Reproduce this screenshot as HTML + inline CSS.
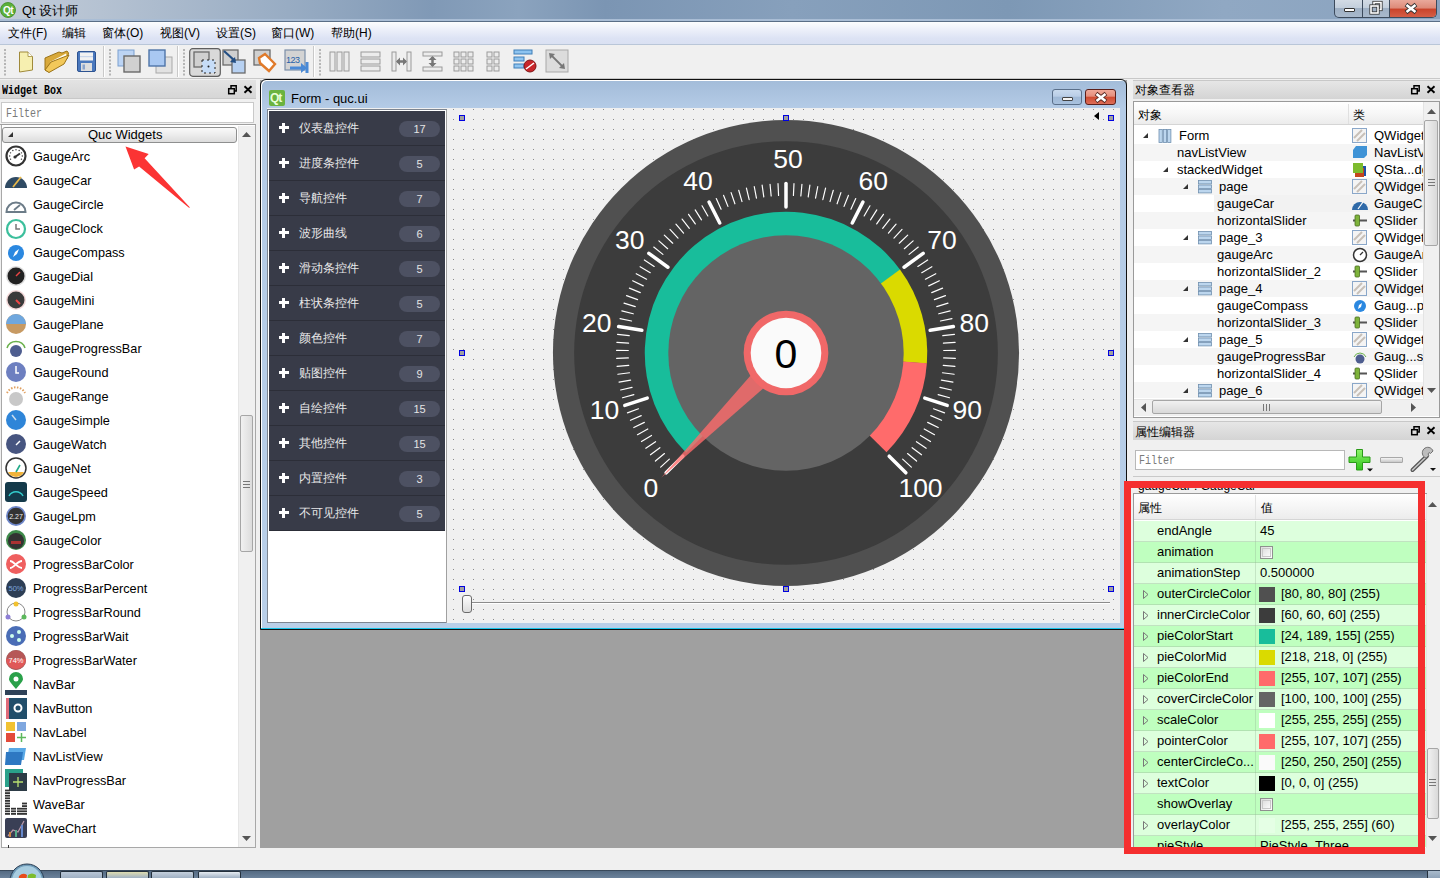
<!DOCTYPE html><html><head><meta charset="utf-8"><style>
html,body{margin:0;padding:0;width:1440px;height:878px;overflow:hidden;background:#f0f0f0;}
body{position:relative;font-family:"Liberation Sans",sans-serif;}
div{box-sizing:border-box;}
.t{position:absolute;white-space:nowrap;line-height:1;}
svg{position:absolute;overflow:visible;}
</style></head><body>
<div style="position:absolute;left:0px;top:0px;width:1440px;height:21px;background:linear-gradient(90deg,#c3cdd9 0%,#b5c2d2 7%,#98acc3 20%,#8099b6 30%,#8ba3be 36%,#7b95b3 42%,#87a0bc 55%,#7d98b5 70%,#90a8c3 85%,#8aa3bf 100%);"></div>
<div style="position:absolute;left:0px;top:19px;width:1440px;height:2px;background:#a9bdd5;"></div>
<div style="position:absolute;left:0px;top:21px;width:1440px;height:1px;background:#5a6e86;"></div>
<svg style="left:0;top:2px" width="18" height="18"><circle cx="8" cy="8" r="7.5" fill="#5cb03a" stroke="#3f8a25" stroke-width="0.8"/><text x="8" y="12" font-family="Liberation Sans" font-size="10" font-weight="bold" fill="#fff" text-anchor="middle" letter-spacing="-0.5">Qt</text></svg>
<div class="t" style="left:22px;top:4px;font-size:13px;color:#000;">Qt 设计师</div>
<div style="position:absolute;left:1334px;top:0px;width:103px;height:18px;border:1px solid #3c4a5c;border-top:none;border-radius:0 0 5px 5px;background:linear-gradient(#d3dbe5 0%,#c3cfdc 45%,#9fb0c4 50%,#a9b9cc 100%);overflow:hidden;"><div style="position:absolute;left:27px;top:0;width:1px;height:18px;background:#3c4a5c"></div><div style="position:absolute;left:54px;top:0;width:48px;height:18px;background:linear-gradient(#e9a99b 0%,#dd8a78 45%,#c9432a 50%,#d6614a 100%);border-left:1px solid #3c4a5c"></div><div style="position:absolute;left:9px;top:8px;width:11px;height:4px;background:#fff;border:1px solid #333;border-radius:1px"></div><svg style="left:34px;top:1px" width="14" height="14"><rect x="5" y="1.5" width="7" height="7" fill="none" stroke="#333" stroke-width="3.2"/><rect x="5" y="1.5" width="7" height="7" fill="none" stroke="#fff" stroke-width="1.6"/><rect x="2" y="5" width="7" height="7" fill="#9fb0c4" stroke="#333" stroke-width="3.2"/><rect x="2" y="5" width="7" height="7" fill="none" stroke="#fff" stroke-width="1.6"/></svg><svg style="left:69px;top:3px" width="14" height="11"><path d="M2,1.5 L12,9.5 M12,1.5 L2,9.5" stroke="#333" stroke-width="4.2"/><path d="M2.5,2 L11.5,9 M11.5,2 L2.5,9" stroke="#fff" stroke-width="2.6"/></svg></div>
<div style="position:absolute;left:0px;top:22px;width:1440px;height:23px;background:linear-gradient(#fcfdfe 0%,#eef1fa 30%,#dde3f4 70%,#d9e0f2 100%);"></div>
<div style="position:absolute;left:0px;top:44px;width:1440px;height:1px;background:#b9c6d8;"></div>
<div class="t" style="left:8px;top:26.84px;font-size:12px;color:#000;">文件(F)</div>
<div class="t" style="left:62px;top:26.84px;font-size:12px;color:#000;">编辑</div>
<div class="t" style="left:102px;top:26.84px;font-size:12px;color:#000;">窗体(O)</div>
<div class="t" style="left:160px;top:26.84px;font-size:12px;color:#000;">视图(V)</div>
<div class="t" style="left:216px;top:26.84px;font-size:12px;color:#000;">设置(S)</div>
<div class="t" style="left:271px;top:26.84px;font-size:12px;color:#000;">窗口(W)</div>
<div class="t" style="left:331px;top:26.84px;font-size:12px;color:#000;">帮助(H)</div>
<div style="position:absolute;left:0px;top:45px;width:1440px;height:34px;background:#f0f0f0;"></div>
<div style="position:absolute;left:0px;top:78px;width:1440px;height:1px;background:#c8c8c8;"></div>
<div style="position:absolute;left:0px;top:79px;width:1440px;height:1px;background:#f0f0f0;"></div>
<svg style="left:4px;top:49px" width="3" height="27"><rect x="0" y="0.0" width="2" height="2" fill="#b5b5b5"/><rect x="0" y="3.5" width="2" height="2" fill="#b5b5b5"/><rect x="0" y="7.0" width="2" height="2" fill="#b5b5b5"/><rect x="0" y="10.5" width="2" height="2" fill="#b5b5b5"/><rect x="0" y="14.0" width="2" height="2" fill="#b5b5b5"/><rect x="0" y="17.5" width="2" height="2" fill="#b5b5b5"/><rect x="0" y="21.0" width="2" height="2" fill="#b5b5b5"/><rect x="0" y="24.5" width="2" height="2" fill="#b5b5b5"/></svg>
<svg style="left:109px;top:49px" width="3" height="27"><rect x="0" y="0.0" width="2" height="2" fill="#b5b5b5"/><rect x="0" y="3.5" width="2" height="2" fill="#b5b5b5"/><rect x="0" y="7.0" width="2" height="2" fill="#b5b5b5"/><rect x="0" y="10.5" width="2" height="2" fill="#b5b5b5"/><rect x="0" y="14.0" width="2" height="2" fill="#b5b5b5"/><rect x="0" y="17.5" width="2" height="2" fill="#b5b5b5"/><rect x="0" y="21.0" width="2" height="2" fill="#b5b5b5"/><rect x="0" y="24.5" width="2" height="2" fill="#b5b5b5"/></svg>
<svg style="left:183px;top:49px" width="3" height="27"><rect x="0" y="0.0" width="2" height="2" fill="#b5b5b5"/><rect x="0" y="3.5" width="2" height="2" fill="#b5b5b5"/><rect x="0" y="7.0" width="2" height="2" fill="#b5b5b5"/><rect x="0" y="10.5" width="2" height="2" fill="#b5b5b5"/><rect x="0" y="14.0" width="2" height="2" fill="#b5b5b5"/><rect x="0" y="17.5" width="2" height="2" fill="#b5b5b5"/><rect x="0" y="21.0" width="2" height="2" fill="#b5b5b5"/><rect x="0" y="24.5" width="2" height="2" fill="#b5b5b5"/></svg>
<svg style="left:319px;top:49px" width="3" height="27"><rect x="0" y="0.0" width="2" height="2" fill="#b5b5b5"/><rect x="0" y="3.5" width="2" height="2" fill="#b5b5b5"/><rect x="0" y="7.0" width="2" height="2" fill="#b5b5b5"/><rect x="0" y="10.5" width="2" height="2" fill="#b5b5b5"/><rect x="0" y="14.0" width="2" height="2" fill="#b5b5b5"/><rect x="0" y="17.5" width="2" height="2" fill="#b5b5b5"/><rect x="0" y="21.0" width="2" height="2" fill="#b5b5b5"/><rect x="0" y="24.5" width="2" height="2" fill="#b5b5b5"/></svg>
<div style="position:absolute;left:103px;top:46px;width:1px;height:31px;background:#c9c9c9;"></div>
<div style="position:absolute;left:104px;top:46px;width:1px;height:31px;background:#fff;"></div>
<div style="position:absolute;left:177px;top:46px;width:1px;height:31px;background:#c9c9c9;"></div>
<div style="position:absolute;left:178px;top:46px;width:1px;height:31px;background:#fff;"></div>
<div style="position:absolute;left:313px;top:46px;width:1px;height:31px;background:#c9c9c9;"></div>
<div style="position:absolute;left:314px;top:46px;width:1px;height:31px;background:#fff;"></div>
<svg style="left:18px;top:50px" width="16" height="24"><path d="M1.5,2 H10 L14.5,6.5 V20 L1.5,22 Z" fill="#f6efb0" stroke="#a08a3a" stroke-width="1"/><path d="M10,2 V6.5 H14.5" fill="#fff" stroke="#a08a3a" stroke-width="0.8"/></svg><svg style="left:43px;top:49px" width="27" height="26"><path d="M2,9 L16,3 L19,4 L24,2 L25.5,4 L24,10 L6,23 L2,21 Z" fill="#d9a93a" stroke="#9c7419" stroke-width="1"/><path d="M7,13 L23,4.5 L24,8 L9,17 Z" fill="#fffdf0"/><path d="M2,21 L8,13 L26,6 L21,15 L6,23.5 Z" fill="#f2c85a" stroke="#9c7419" stroke-width="1"/></svg><svg style="left:76px;top:50px" width="22" height="24"><rect x="1.5" y="1.5" width="18" height="20" rx="1.5" fill="#4a78bd" stroke="#2d5391" stroke-width="1"/><rect x="4" y="2.5" width="13" height="8" fill="#f2f2f2"/><rect x="4" y="6" width="13" height="1.2" fill="#c9d6ea"/><rect x="5" y="13" width="11" height="8" fill="#dedede"/><rect x="6.5" y="14.5" width="2.5" height="5" fill="#8aa4cc"/></svg><svg style="left:117px;top:49px" width="26" height="26"><rect x="1" y="1" width="16" height="16" fill="#bcd4f4" stroke="#7a9fcf" stroke-width="1"/><rect x="7" y="7" width="16" height="16" fill="#d0d0d0" stroke="#6a6a6a" stroke-width="1.4"/></svg><svg style="left:148px;top:49px" width="26" height="26"><rect x="8" y="8" width="16" height="16" fill="#e2e2e2" stroke="#a8a8a8" stroke-width="1"/><rect x="1" y="1" width="16" height="16" fill="#a9c8f2" stroke="#4f74a8" stroke-width="1.4"/></svg><svg style="left:189px;top:48px" width="32" height="29"><rect x="0.7" y="0.7" width="30.6" height="27.6" rx="3" fill="#d9d9d9" stroke="#5e5e5e" stroke-width="1.2"/><rect x="5" y="4" width="15" height="15" fill="#d0d0d0" stroke="#6a6a6a" stroke-width="1.3"/><rect x="13" y="12" width="13" height="13" fill="#c6dcf7" stroke="#222" stroke-width="1" stroke-dasharray="2 3"/><circle cx="19.5" cy="18.5" r="1" fill="#222"/></svg><svg style="left:222px;top:49px" width="26" height="26"><rect x="1" y="1" width="15" height="15" fill="#d0d0d0" stroke="#6a6a6a" stroke-width="1.3"/><rect x="10" y="11" width="13" height="13" fill="#b7d1f2" stroke="#6a6a6a" stroke-width="1.3"/><path d="M2,2 L13,12" stroke="#244f84" stroke-width="2.2"/><polygon points="14,14 8,13 13,8" fill="#244f84"/></svg><svg style="left:253px;top:49px" width="26" height="26"><rect x="1" y="1" width="16" height="15" fill="#d0d0d0" stroke="#6a6a6a" stroke-width="1.3"/><polygon points="6,9 12,5 22,15 16,22 7,14" fill="#fff" stroke="#e07a2a" stroke-width="2.4"/></svg><svg style="left:284px;top:49px" width="26" height="27"><rect x="1" y="1" width="20" height="20" fill="#d3d3d3" stroke="#7c8fa8" stroke-width="1.2"/><text x="2" y="14" font-family="Liberation Sans" font-size="9" fill="#2660a8" letter-spacing="-0.5">123</text><path d="M6,19 H19" stroke="#4a8ad6" stroke-width="3"/><polygon points="17,14 23,19 17,24" fill="#4a8ad6"/><rect x="21.5" y="13" width="3" height="11" fill="#4a8ad6"/></svg><svg style="left:329px;top:51px" width="22" height="22"><rect x="1" y="1" width="5" height="19" fill="#ececec" stroke="#9a9a9a" stroke-width="1"/><rect x="8" y="1" width="5" height="19" fill="#ececec" stroke="#9a9a9a" stroke-width="1"/><rect x="15" y="1" width="5" height="19" fill="#ececec" stroke="#9a9a9a" stroke-width="1"/></svg><svg style="left:360px;top:51px" width="22" height="22"><rect x="1" y="1" width="19" height="5" fill="#ececec" stroke="#9a9a9a" stroke-width="1"/><rect x="1" y="8" width="19" height="5" fill="#ececec" stroke="#9a9a9a" stroke-width="1"/><rect x="1" y="15" width="19" height="5" fill="#ececec" stroke="#9a9a9a" stroke-width="1"/></svg><svg style="left:391px;top:51px" width="22" height="22"><rect x="1" y="1" width="4" height="19" fill="#ececec" stroke="#9a9a9a"/><rect x="16" y="1" width="4" height="19" fill="#ececec" stroke="#9a9a9a"/><path d="M6,10.5 H15" stroke="#777" stroke-width="2.5"/><polygon points="5,10.5 9,6.5 9,14.5" fill="#777"/><polygon points="16,10.5 12,6.5 12,14.5" fill="#777"/></svg><svg style="left:422px;top:51px" width="22" height="22"><rect x="1" y="1" width="19" height="4" fill="#ececec" stroke="#9a9a9a"/><rect x="1" y="16" width="19" height="4" fill="#ececec" stroke="#9a9a9a"/><path d="M10.5,6 V15" stroke="#777" stroke-width="2.5"/><polygon points="10.5,5 6.5,9 14.5,9" fill="#777"/><polygon points="10.5,16 6.5,12 14.5,12" fill="#777"/></svg><svg style="left:453px;top:51px" width="22" height="22"><rect x="1" y="1" width="5" height="5" fill="#ececec" stroke="#9a9a9a"/><rect x="1" y="8" width="5" height="5" fill="#ececec" stroke="#9a9a9a"/><rect x="1" y="15" width="5" height="5" fill="#ececec" stroke="#9a9a9a"/><rect x="8" y="1" width="5" height="5" fill="#ececec" stroke="#9a9a9a"/><rect x="8" y="8" width="5" height="5" fill="#ececec" stroke="#9a9a9a"/><rect x="8" y="15" width="5" height="5" fill="#ececec" stroke="#9a9a9a"/><rect x="15" y="1" width="5" height="5" fill="#ececec" stroke="#9a9a9a"/><rect x="15" y="8" width="5" height="5" fill="#ececec" stroke="#9a9a9a"/><rect x="15" y="15" width="5" height="5" fill="#ececec" stroke="#9a9a9a"/></svg><svg style="left:486px;top:51px" width="16" height="22"><rect x="1" y="1" width="5" height="5" fill="#ececec" stroke="#9a9a9a"/><rect x="1" y="8" width="5" height="5" fill="#ececec" stroke="#9a9a9a"/><rect x="1" y="15" width="5" height="5" fill="#ececec" stroke="#9a9a9a"/><rect x="8" y="1" width="5" height="5" fill="#ececec" stroke="#9a9a9a"/><rect x="8" y="8" width="5" height="5" fill="#ececec" stroke="#9a9a9a"/><rect x="8" y="15" width="5" height="5" fill="#ececec" stroke="#9a9a9a"/></svg><svg style="left:513px;top:49px" width="26" height="26"><rect x="1" y="1" width="18" height="4" fill="#8ec4f0" stroke="#3f7fb8"/><rect x="1" y="8" width="10" height="4" fill="#8ec4f0" stroke="#3f7fb8"/><rect x="1" y="15" width="10" height="4" fill="#8ec4f0" stroke="#3f7fb8"/><circle cx="17" cy="17" r="6" fill="#c8262a" stroke="#7e1416"/><path d="M13,20 L21,14" stroke="#fff" stroke-width="1.5"/></svg><svg style="left:545px;top:49px" width="25" height="25"><rect x="1" y="1" width="22" height="22" fill="#dcdcdc" stroke="#a8a8a8"/><path d="M6,6 L18,18" stroke="#777" stroke-width="1.8"/><polygon points="4,4 10,5 5,10" fill="#777"/><polygon points="20,20 14,19 19,14" fill="#777"/></svg>
<div style="position:absolute;left:0px;top:80px;width:256px;height:19px;background:linear-gradient(#e3e3e3,#d6d6d6);border-bottom:1px solid #c8c8c8;"></div>
<div class="t" style="left:2px;top:86.53px;font-size:10px;color:#000;font-family:'Liberation Mono';font-weight:bold;transform:scaleY(1.2);transform-origin:0 85%;">Widget Box</div>
<div style="position:absolute;left:0px;top:99px;width:256px;height:750px;background:#f0f0f0;"></div>
<div style="position:absolute;left:1px;top:102px;width:253px;height:21px;background:#fff;border:1px solid #c9c9c9;"></div>
<div class="t" style="left:6px;top:110.03px;font-size:10px;color:#7a7a7a;font-family:'Liberation Mono';transform:scaleY(1.2);transform-origin:0 85%;">Filter</div>
<div style="position:absolute;left:0px;top:124px;width:256px;height:1px;background:#a0a0a0;"></div>
<div style="position:absolute;left:1px;top:125px;width:255px;height:723px;background:#fff;border:1px solid #a8a8a8;border-top:none;"></div>
<div style="position:absolute;left:2px;top:127px;width:235px;height:16px;border:1px solid #8e8f8f;border-radius:3px;background:linear-gradient(#fafafa 0%,#ececec 50%,#dcdcdc 100%);"></div>
<svg style="left:8px;top:132px" width="6" height="6"><polygon points="5,0 5,5 0,5" fill="#333"/></svg>
<div class="t" style="left:88px;top:128.00px;font-size:13px;color:#000;">Quc Widgets</div>
<div style="position:absolute;left:238px;top:126px;width:17px;height:721px;background:#f0f0f0;border-left:1px solid #e6e6e6;"></div>
<svg style="left:242px;top:132px" width="9" height="5"><polygon points="0,5 4.5,0 9,5" fill="#555"/></svg>
<svg style="left:242px;top:836px" width="9" height="5"><polygon points="0,0 4.5,5 9,0" fill="#555"/></svg>
<div style="position:absolute;left:240px;top:415px;width:13px;height:137px;border:1px solid #a6a6a6;border-radius:2px;background:linear-gradient(90deg,#f1f1f1,#dcdcdc);"></div>
<div style="position:absolute;left:243px;top:481px;width:7px;height:1px;background:#777;"></div>
<div style="position:absolute;left:243px;top:484px;width:7px;height:1px;background:#777;"></div>
<div style="position:absolute;left:243px;top:487px;width:7px;height:1px;background:#777;"></div>
<svg style="left:5px;top:145px" width="22" height="22"><circle cx="11" cy="11" r="9.5" fill="#fff" stroke="#333" stroke-width="2.2"/><circle cx="16.46" cy="14.15" r="0.7" fill="#333"/><circle cx="17.30" cy="11.00" r="0.7" fill="#333"/><circle cx="16.46" cy="7.85" r="0.7" fill="#333"/><circle cx="14.15" cy="5.54" r="0.7" fill="#333"/><circle cx="11.00" cy="4.70" r="0.7" fill="#333"/><circle cx="7.85" cy="5.54" r="0.7" fill="#333"/><circle cx="5.54" cy="7.85" r="0.7" fill="#333"/><circle cx="4.70" cy="11.00" r="0.7" fill="#333"/><circle cx="5.54" cy="14.15" r="0.7" fill="#333"/><line x1="10" y1="12" x2="15" y2="8.5" stroke="#333" stroke-width="2"/><circle cx="10" cy="12" r="1.6" fill="#333"/></svg>
<div class="t" style="left:33px;top:150.75px;font-size:12.7px;color:#000;">GaugeArc</div>
<svg style="left:5px;top:169px" width="22" height="22"><path d="M0,19 A11,11 0 0 1 22,19 Z" fill="#2f4a63"/><line x1="8" y1="18" x2="16" y2="8" stroke="#e8b84a" stroke-width="1.8"/></svg>
<div class="t" style="left:33px;top:174.75px;font-size:12.7px;color:#000;">GaugeCar</div>
<svg style="left:5px;top:193px" width="22" height="22"><path d="M1.5,19 A9.5,9.5 0 1 1 20.5,19 Z" fill="#fff" stroke="#6c7c88" stroke-width="2"/><line x1="9" y1="17" x2="15" y2="12" stroke="#6c7c88" stroke-width="1.8"/></svg>
<div class="t" style="left:33px;top:198.75px;font-size:12.7px;color:#000;">GaugeCircle</div>
<svg style="left:5px;top:217px" width="22" height="22"><circle cx="11" cy="12" r="9" fill="#fff" stroke="#3cbf9c" stroke-width="2.2"/><path d="M11,7 V12 H15" fill="none" stroke="#777" stroke-width="1.5"/></svg>
<div class="t" style="left:33px;top:222.75px;font-size:12.7px;color:#000;">GaugeClock</div>
<svg style="left:5px;top:241px" width="22" height="22"><circle cx="11" cy="12" r="8" fill="#2b88e0"/><polygon points="14,8 12,13 8,16 10,11" fill="#fff"/></svg>
<div class="t" style="left:33px;top:246.75px;font-size:12.7px;color:#000;">GaugeCompass</div>
<svg style="left:5px;top:265px" width="22" height="22"><circle cx="11" cy="11" r="10" fill="#ddd"/><circle cx="11" cy="11" r="8.5" fill="#222"/><line x1="11" y1="11" x2="15" y2="7" stroke="#e44" stroke-width="1.5"/></svg>
<div class="t" style="left:33px;top:270.75px;font-size:12.7px;color:#000;">GaugeDial</div>
<svg style="left:5px;top:289px" width="22" height="22"><circle cx="11" cy="11" r="10" fill="#f3d9d9"/><circle cx="11" cy="11" r="8.5" fill="#3a3a3a"/><line x1="11" y1="11" x2="15" y2="15" stroke="#e44" stroke-width="2"/></svg>
<div class="t" style="left:33px;top:294.75px;font-size:12.7px;color:#000;">GaugeMini</div>
<svg style="left:5px;top:313px" width="22" height="22"><circle cx="11" cy="11" r="10" fill="#c79a63"/><path d="M1,11 A10,10 0 0 1 21,11 Z" fill="#6fa7de"/></svg>
<div class="t" style="left:33px;top:318.75px;font-size:12.7px;color:#000;">GaugePlane</div>
<svg style="left:5px;top:337px" width="22" height="22"><path d="M2,11 A9.5,9.5 0 0 1 20,11" fill="none" stroke="#6ab04c" stroke-width="1.5"/><circle cx="11" cy="14" r="6" fill="#4e5d8f"/></svg>
<div class="t" style="left:33px;top:342.75px;font-size:12.7px;color:#000;">GaugeProgressBar</div>
<svg style="left:5px;top:361px" width="22" height="22"><circle cx="11" cy="11" r="10" fill="#6d7fc0"/><path d="M11,5 V12 H14" fill="none" stroke="#fff" stroke-width="1.5"/></svg>
<div class="t" style="left:33px;top:366.75px;font-size:12.7px;color:#000;">GaugeRound</div>
<svg style="left:5px;top:385px" width="22" height="22"><path d="M2,8 A10,10 0 0 1 20,8" fill="none" stroke="#e0a060" stroke-width="2" stroke-dasharray="1.5 1.5"/><circle cx="11" cy="14" r="7" fill="#c8c8c8"/></svg>
<div class="t" style="left:33px;top:390.75px;font-size:12.7px;color:#000;">GaugeRange</div>
<svg style="left:5px;top:409px" width="22" height="22"><circle cx="11" cy="11" r="10" fill="#2e85d8"/><line x1="11" y1="11" x2="7" y2="6" stroke="#cde" stroke-width="1.5"/></svg>
<div class="t" style="left:33px;top:414.75px;font-size:12.7px;color:#000;">GaugeSimple</div>
<svg style="left:5px;top:433px" width="22" height="22"><circle cx="11" cy="11" r="10" fill="#475580"/><line x1="11" y1="12" x2="15" y2="8" stroke="#fff" stroke-width="1.5"/></svg>
<div class="t" style="left:33px;top:438.75px;font-size:12.7px;color:#000;">GaugeWatch</div>
<svg style="left:5px;top:457px" width="22" height="22"><circle cx="11" cy="11" r="10" fill="#fff" stroke="#333" stroke-width="1.5"/><path d="M3,15 A9,9 0 0 0 19,15 Z" fill="#f1b43a"/><line x1="11" y1="15" x2="15" y2="8" stroke="#2a8" stroke-width="1.6"/></svg>
<div class="t" style="left:33px;top:462.75px;font-size:12.7px;color:#000;">GaugeNet</div>
<svg style="left:5px;top:481px" width="22" height="22"><rect x="0" y="1" width="22" height="20" rx="3" fill="#143a4a"/><path d="M4,15 A8,8 0 0 1 18,15" fill="none" stroke="#3cc" stroke-width="1.5"/></svg>
<div class="t" style="left:33px;top:486.75px;font-size:12.7px;color:#000;">GaugeSpeed</div>
<svg style="left:5px;top:505px" width="22" height="22"><circle cx="11" cy="11" r="10" fill="#6d86c9"/><circle cx="11" cy="11" r="8.3" fill="#333"/><text x="11" y="14" font-size="7" fill="#eee" text-anchor="middle" font-family="Liberation Sans">2.27</text></svg>
<div class="t" style="left:33px;top:510.75px;font-size:12.7px;color:#000;">GaugeLpm</div>
<svg style="left:5px;top:529px" width="22" height="22"><circle cx="11" cy="11" r="10" fill="#3e8a4a"/><circle cx="11" cy="12" r="8" fill="#333"/><rect x="6" y="12" width="10" height="3" fill="#a33"/></svg>
<div class="t" style="left:33px;top:534.75px;font-size:12.7px;color:#000;">GaugeColor</div>
<svg style="left:5px;top:553px" width="22" height="22"><circle cx="11" cy="11" r="10" fill="#ef5f5f"/><path d="M5,8 C9,8 12,15 17,15 M5,15 C9,15 12,8 17,8" fill="none" stroke="#fff" stroke-width="1.8"/></svg>
<div class="t" style="left:33px;top:558.75px;font-size:12.7px;color:#000;">ProgressBarColor</div>
<svg style="left:5px;top:577px" width="22" height="22"><circle cx="11" cy="11" r="10" fill="#2d3e55"/><text x="11" y="14" font-size="7.5" fill="#7fa7df" text-anchor="middle" font-family="Liberation Sans">50%</text></svg>
<div class="t" style="left:33px;top:582.75px;font-size:12.7px;color:#000;">ProgressBarPercent</div>
<svg style="left:5px;top:601px" width="22" height="22"><circle cx="11" cy="11" r="9" fill="none" stroke="#888" stroke-width="1"/><circle cx="11" cy="3" r="2.5" fill="#f2c230"/><circle cx="3" cy="16" r="2.5" fill="#8e7fd6"/><circle cx="19" cy="16" r="2.5" fill="#5cb85c"/></svg>
<div class="t" style="left:33px;top:606.75px;font-size:12.7px;color:#000;">ProgressBarRound</div>
<svg style="left:5px;top:625px" width="22" height="22"><circle cx="11" cy="11" r="10" fill="#4a6db6"/><circle cx="7" cy="11" r="2" fill="#cfe"/><circle cx="14" cy="7" r="2" fill="#cfe"/><circle cx="14" cy="15" r="2" fill="#cfe"/></svg>
<div class="t" style="left:33px;top:630.75px;font-size:12.7px;color:#000;">ProgressBarWait</div>
<svg style="left:5px;top:649px" width="22" height="22"><circle cx="11" cy="11" r="10" fill="#555"/><path d="M1,10 A10,10 0 0 0 21,10 Z" fill="#e05858"/><circle cx="11" cy="11" r="10" fill="#e05858" opacity="0.7"/><text x="11" y="14" font-size="7.5" fill="#fff" text-anchor="middle" font-family="Liberation Sans">74%</text></svg>
<div class="t" style="left:33px;top:654.75px;font-size:12.7px;color:#000;">ProgressBarWater</div>
<svg style="left:5px;top:673px" width="22" height="22"><path d="M11,16 C6,10 4,8 4,6 A7,7 0 0 1 18,6 C18,8 16,10 11,16 Z" fill="#2aa14a"/><circle cx="11" cy="6" r="2.5" fill="#fff"/><rect x="0" y="17" width="22" height="5" fill="#2f4258"/></svg>
<div class="t" style="left:33px;top:678.75px;font-size:12.7px;color:#000;">NavBar</div>
<svg style="left:5px;top:697px" width="22" height="22"><rect x="1" y="1" width="21" height="21" fill="#214e6a"/><rect x="1" y="1" width="3" height="21" fill="#e06b7a"/><circle cx="13" cy="11" r="3.5" fill="none" stroke="#fff" stroke-width="2"/></svg>
<div class="t" style="left:33px;top:702.75px;font-size:12.7px;color:#000;">NavButton</div>
<svg style="left:5px;top:721px" width="22" height="22"><rect x="1" y="1" width="9" height="9" fill="#f1c232"/><rect x="12" y="1" width="9" height="9" fill="#7fa7df"/><rect x="1" y="12" width="9" height="9" fill="#e34b3b"/><path d="M16.5,12 V21 M12,16.5 H21" stroke="#5cb85c" stroke-width="1.5"/></svg>
<div class="t" style="left:33px;top:726.75px;font-size:12.7px;color:#000;">NavLabel</div>
<svg style="left:5px;top:745px" width="22" height="22"><polygon points="4,3 21,3 19,15 2,15" fill="#58a8e6"/><polygon points="1,7 18,7 16,20 0,20" fill="#2e78c2"/></svg>
<div class="t" style="left:33px;top:750.75px;font-size:12.7px;color:#000;">NavListView</div>
<svg style="left:5px;top:769px" width="22" height="22"><rect x="0" y="0" width="18" height="18" fill="#2aa18a"/><rect x="4" y="4" width="18" height="18" fill="#2d3b46"/><path d="M13,8 V18 M8,13 H18" stroke="#b8e070" stroke-width="1.3"/></svg>
<div class="t" style="left:33px;top:774.75px;font-size:12.7px;color:#000;">NavProgressBar</div>
<svg style="left:5px;top:793px" width="22" height="22"><rect x="0" y="20.0" width="5" height="1.8" fill="#333"/><rect x="0" y="17.4" width="5" height="1.8" fill="#333"/><rect x="0" y="14.8" width="5" height="1.8" fill="#333"/><rect x="0" y="12.2" width="5" height="1.8" fill="#333"/><rect x="0" y="9.6" width="5" height="1.8" fill="#333"/><rect x="0" y="7.0" width="5" height="1.8" fill="#333"/><rect x="0" y="4.399999999999999" width="5" height="1.8" fill="#333"/><rect x="0" y="1.8000000000000007" width="5" height="1.8" fill="#333"/><rect x="0" y="-0.8000000000000007" width="5" height="1.8" fill="#333"/><rect x="0" y="-3.400000000000002" width="5" height="1.8" fill="#333"/><rect x="6" y="20.0" width="5" height="1.8" fill="#333"/><rect x="6" y="17.4" width="5" height="1.8" fill="#333"/><rect x="6" y="14.8" width="5" height="1.8" fill="#333"/><rect x="12" y="20.0" width="5" height="1.8" fill="#333"/><rect x="12" y="17.4" width="5" height="1.8" fill="#333"/><rect x="12" y="14.8" width="5" height="1.8" fill="#333"/><rect x="17" y="20.0" width="5" height="1.8" fill="#333"/><rect x="17" y="17.4" width="5" height="1.8" fill="#333"/><rect x="17" y="14.8" width="5" height="1.8" fill="#333"/><rect x="17" y="12.2" width="5" height="1.8" fill="#333"/><rect x="17" y="9.6" width="5" height="1.8" fill="#333"/></svg>
<div class="t" style="left:33px;top:798.75px;font-size:12.7px;color:#000;">WaveBar</div>
<svg style="left:5px;top:817px" width="22" height="22"><rect x="0" y="1" width="22" height="20" rx="2" fill="#3a3f55"/><path d="M3,19 L8,13 L13,15 L19,4" fill="none" stroke="#b9a" stroke-width="1.2"/><rect x="4" y="15" width="2" height="5" fill="#c84"/><rect x="10" y="13" width="2" height="7" fill="#5a8"/><rect x="16" y="8" width="2" height="12" fill="#68c"/></svg>
<div class="t" style="left:33px;top:822.75px;font-size:12.7px;color:#000;">WaveChart</div>
<div style="position:absolute;left:8px;top:845px;width:1px;height:3px;background:#333;"></div>
<div style="position:absolute;left:256px;top:80px;width:4px;height:769px;background:#f0f0f0;"></div>
<div style="position:absolute;left:260px;top:80px;width:867px;height:769px;background:#a0a0a0;"></div>
<div style="position:absolute;left:260px;top:79px;width:867px;height:551px;background:linear-gradient(#a3bcd9 0px,#b4cbe6 28px,#b9cfe8 100%);border:1px solid #101010;border-radius:6px 6px 0 0;box-shadow:inset 1px 1px 0 #fff;"></div>
<div style="position:absolute;left:267px;top:108px;width:853px;height:515px;background:#f0f0f0;"></div>
<svg style="left:268px;top:109px" width="852" height="514"><defs><pattern id="dots" x="5" y="0" width="10" height="10" patternUnits="userSpaceOnUse"><rect x="0" y="0" width="1" height="1" fill="#8c8c8c"/></pattern></defs><rect width="852" height="514" fill="#f0f0f0"/><rect width="852" height="514" fill="url(#dots)"/></svg>
<div style="position:absolute;left:267px;top:109px;width:180px;height:514px;background:#fff;border:1px solid #7d8590;border-right:none;"></div>
<div style="position:absolute;left:269px;top:111px;width:176px;height:35px;background:#383b48;border-bottom:1px solid #2c2e38;"></div>
<div style="position:absolute;left:279px;top:126px;width:10px;height:3px;background:#fff;"></div>
<div style="position:absolute;left:282px;top:123px;width:3px;height:10px;background:#fff"></div>
<div style="position:absolute;left:279px;top:126px;width:9px;height:3px;background:#fff"></div>
<div class="t" style="left:299px;top:122px;font-size:12px;color:#e8e8e8;">仪表盘控件</div>
<div style="position:absolute;left:399px;top:121px;width:41px;height:16px;background:#4d5162;border-radius:8px;"><div style="position:absolute;left:0;top:2.5px;width:41px;text-align:center;font-size:11px;color:#e4e4e4;line-height:1">17</div></div>
<div style="position:absolute;left:269px;top:146px;width:176px;height:35px;background:#383b48;border-bottom:1px solid #2c2e38;"></div>
<div style="position:absolute;left:279px;top:161px;width:10px;height:3px;background:#fff;"></div>
<div style="position:absolute;left:282px;top:158px;width:3px;height:10px;background:#fff"></div>
<div style="position:absolute;left:279px;top:161px;width:9px;height:3px;background:#fff"></div>
<div class="t" style="left:299px;top:157px;font-size:12px;color:#e8e8e8;">进度条控件</div>
<div style="position:absolute;left:399px;top:156px;width:41px;height:16px;background:#4d5162;border-radius:8px;"><div style="position:absolute;left:0;top:2.5px;width:41px;text-align:center;font-size:11px;color:#e4e4e4;line-height:1">5</div></div>
<div style="position:absolute;left:269px;top:181px;width:176px;height:35px;background:#383b48;border-bottom:1px solid #2c2e38;"></div>
<div style="position:absolute;left:279px;top:196px;width:10px;height:3px;background:#fff;"></div>
<div style="position:absolute;left:282px;top:193px;width:3px;height:10px;background:#fff"></div>
<div style="position:absolute;left:279px;top:196px;width:9px;height:3px;background:#fff"></div>
<div class="t" style="left:299px;top:192px;font-size:12px;color:#e8e8e8;">导航控件</div>
<div style="position:absolute;left:399px;top:191px;width:41px;height:16px;background:#4d5162;border-radius:8px;"><div style="position:absolute;left:0;top:2.5px;width:41px;text-align:center;font-size:11px;color:#e4e4e4;line-height:1">7</div></div>
<div style="position:absolute;left:269px;top:216px;width:176px;height:35px;background:#383b48;border-bottom:1px solid #2c2e38;"></div>
<div style="position:absolute;left:279px;top:231px;width:10px;height:3px;background:#fff;"></div>
<div style="position:absolute;left:282px;top:228px;width:3px;height:10px;background:#fff"></div>
<div style="position:absolute;left:279px;top:231px;width:9px;height:3px;background:#fff"></div>
<div class="t" style="left:299px;top:227px;font-size:12px;color:#e8e8e8;">波形曲线</div>
<div style="position:absolute;left:399px;top:226px;width:41px;height:16px;background:#4d5162;border-radius:8px;"><div style="position:absolute;left:0;top:2.5px;width:41px;text-align:center;font-size:11px;color:#e4e4e4;line-height:1">6</div></div>
<div style="position:absolute;left:269px;top:251px;width:176px;height:35px;background:#383b48;border-bottom:1px solid #2c2e38;"></div>
<div style="position:absolute;left:279px;top:266px;width:10px;height:3px;background:#fff;"></div>
<div style="position:absolute;left:282px;top:263px;width:3px;height:10px;background:#fff"></div>
<div style="position:absolute;left:279px;top:266px;width:9px;height:3px;background:#fff"></div>
<div class="t" style="left:299px;top:262px;font-size:12px;color:#e8e8e8;">滑动条控件</div>
<div style="position:absolute;left:399px;top:261px;width:41px;height:16px;background:#4d5162;border-radius:8px;"><div style="position:absolute;left:0;top:2.5px;width:41px;text-align:center;font-size:11px;color:#e4e4e4;line-height:1">5</div></div>
<div style="position:absolute;left:269px;top:286px;width:176px;height:35px;background:#383b48;border-bottom:1px solid #2c2e38;"></div>
<div style="position:absolute;left:279px;top:301px;width:10px;height:3px;background:#fff;"></div>
<div style="position:absolute;left:282px;top:298px;width:3px;height:10px;background:#fff"></div>
<div style="position:absolute;left:279px;top:301px;width:9px;height:3px;background:#fff"></div>
<div class="t" style="left:299px;top:297px;font-size:12px;color:#e8e8e8;">柱状条控件</div>
<div style="position:absolute;left:399px;top:296px;width:41px;height:16px;background:#4d5162;border-radius:8px;"><div style="position:absolute;left:0;top:2.5px;width:41px;text-align:center;font-size:11px;color:#e4e4e4;line-height:1">5</div></div>
<div style="position:absolute;left:269px;top:321px;width:176px;height:35px;background:#383b48;border-bottom:1px solid #2c2e38;"></div>
<div style="position:absolute;left:279px;top:336px;width:10px;height:3px;background:#fff;"></div>
<div style="position:absolute;left:282px;top:333px;width:3px;height:10px;background:#fff"></div>
<div style="position:absolute;left:279px;top:336px;width:9px;height:3px;background:#fff"></div>
<div class="t" style="left:299px;top:332px;font-size:12px;color:#e8e8e8;">颜色控件</div>
<div style="position:absolute;left:399px;top:331px;width:41px;height:16px;background:#4d5162;border-radius:8px;"><div style="position:absolute;left:0;top:2.5px;width:41px;text-align:center;font-size:11px;color:#e4e4e4;line-height:1">7</div></div>
<div style="position:absolute;left:269px;top:356px;width:176px;height:35px;background:#383b48;border-bottom:1px solid #2c2e38;"></div>
<div style="position:absolute;left:279px;top:371px;width:10px;height:3px;background:#fff;"></div>
<div style="position:absolute;left:282px;top:368px;width:3px;height:10px;background:#fff"></div>
<div style="position:absolute;left:279px;top:371px;width:9px;height:3px;background:#fff"></div>
<div class="t" style="left:299px;top:367px;font-size:12px;color:#e8e8e8;">贴图控件</div>
<div style="position:absolute;left:399px;top:366px;width:41px;height:16px;background:#4d5162;border-radius:8px;"><div style="position:absolute;left:0;top:2.5px;width:41px;text-align:center;font-size:11px;color:#e4e4e4;line-height:1">9</div></div>
<div style="position:absolute;left:269px;top:391px;width:176px;height:35px;background:#383b48;border-bottom:1px solid #2c2e38;"></div>
<div style="position:absolute;left:279px;top:406px;width:10px;height:3px;background:#fff;"></div>
<div style="position:absolute;left:282px;top:403px;width:3px;height:10px;background:#fff"></div>
<div style="position:absolute;left:279px;top:406px;width:9px;height:3px;background:#fff"></div>
<div class="t" style="left:299px;top:402px;font-size:12px;color:#e8e8e8;">自绘控件</div>
<div style="position:absolute;left:399px;top:401px;width:41px;height:16px;background:#4d5162;border-radius:8px;"><div style="position:absolute;left:0;top:2.5px;width:41px;text-align:center;font-size:11px;color:#e4e4e4;line-height:1">15</div></div>
<div style="position:absolute;left:269px;top:426px;width:176px;height:35px;background:#383b48;border-bottom:1px solid #2c2e38;"></div>
<div style="position:absolute;left:279px;top:441px;width:10px;height:3px;background:#fff;"></div>
<div style="position:absolute;left:282px;top:438px;width:3px;height:10px;background:#fff"></div>
<div style="position:absolute;left:279px;top:441px;width:9px;height:3px;background:#fff"></div>
<div class="t" style="left:299px;top:437px;font-size:12px;color:#e8e8e8;">其他控件</div>
<div style="position:absolute;left:399px;top:436px;width:41px;height:16px;background:#4d5162;border-radius:8px;"><div style="position:absolute;left:0;top:2.5px;width:41px;text-align:center;font-size:11px;color:#e4e4e4;line-height:1">15</div></div>
<div style="position:absolute;left:269px;top:461px;width:176px;height:35px;background:#383b48;border-bottom:1px solid #2c2e38;"></div>
<div style="position:absolute;left:279px;top:476px;width:10px;height:3px;background:#fff;"></div>
<div style="position:absolute;left:282px;top:473px;width:3px;height:10px;background:#fff"></div>
<div style="position:absolute;left:279px;top:476px;width:9px;height:3px;background:#fff"></div>
<div class="t" style="left:299px;top:472px;font-size:12px;color:#e8e8e8;">内置控件</div>
<div style="position:absolute;left:399px;top:471px;width:41px;height:16px;background:#4d5162;border-radius:8px;"><div style="position:absolute;left:0;top:2.5px;width:41px;text-align:center;font-size:11px;color:#e4e4e4;line-height:1">3</div></div>
<div style="position:absolute;left:269px;top:496px;width:176px;height:35px;background:#383b48;border-bottom:1px solid #2c2e38;"></div>
<div style="position:absolute;left:279px;top:511px;width:10px;height:3px;background:#fff;"></div>
<div style="position:absolute;left:282px;top:508px;width:3px;height:10px;background:#fff"></div>
<div style="position:absolute;left:279px;top:511px;width:9px;height:3px;background:#fff"></div>
<div class="t" style="left:299px;top:507px;font-size:12px;color:#e8e8e8;">不可见控件</div>
<div style="position:absolute;left:399px;top:506px;width:41px;height:16px;background:#4d5162;border-radius:8px;"><div style="position:absolute;left:0;top:2.5px;width:41px;text-align:center;font-size:11px;color:#e4e4e4;line-height:1">5</div></div>
<svg style="left:0;top:0" width="1440" height="878"><circle cx="786.0" cy="353.0" r="233.05" fill="rgb(80,80,80)"/><circle cx="786.0" cy="353.0" r="211.86" fill="rgb(60,60,60)"/><path d="M786.0,353.0 L900.27,269.98 A141.24,141.24 0 1 0 686.13,452.87 Z" fill="rgb(24,189,155)"/><path d="M786.0,353.0 L926.84,363.62 A141.24,141.24 0 0 0 899.99,269.61 Z" fill="rgb(218,218,0)"/><path d="M786.0,353.0 L886.52,452.22 A141.24,141.24 0 0 0 926.87,363.16 Z" fill="rgb(255,107,107)"/><circle cx="786.0" cy="353.0" r="117.70" fill="rgb(100,100,100)"/><line x1="682.80" y1="456.20" x2="666.15" y2="472.85" stroke="#fff" stroke-width="3.53" stroke-linecap="round"/><line x1="669.35" y1="459.15" x2="660.64" y2="467.07" stroke="#fff" stroke-width="1.18" stroke-linecap="round"/><line x1="664.48" y1="453.53" x2="655.41" y2="461.04" stroke="#fff" stroke-width="1.18" stroke-linecap="round"/><line x1="659.88" y1="447.70" x2="650.46" y2="454.76" stroke="#fff" stroke-width="1.18" stroke-linecap="round"/><line x1="655.55" y1="441.65" x2="645.82" y2="448.27" stroke="#fff" stroke-width="1.18" stroke-linecap="round"/><line x1="651.52" y1="435.41" x2="641.49" y2="441.56" stroke="#fff" stroke-width="1.18" stroke-linecap="round"/><line x1="647.79" y1="428.98" x2="637.48" y2="434.65" stroke="#fff" stroke-width="1.18" stroke-linecap="round"/><line x1="644.36" y1="422.39" x2="633.80" y2="427.56" stroke="#fff" stroke-width="1.18" stroke-linecap="round"/><line x1="641.25" y1="415.64" x2="630.45" y2="420.31" stroke="#fff" stroke-width="1.18" stroke-linecap="round"/><line x1="638.46" y1="408.75" x2="627.45" y2="412.91" stroke="#fff" stroke-width="1.18" stroke-linecap="round"/><line x1="647.20" y1="398.10" x2="624.81" y2="405.37" stroke="#fff" stroke-width="3.53" stroke-linecap="round"/><line x1="633.87" y1="394.62" x2="622.52" y2="397.72" stroke="#fff" stroke-width="1.18" stroke-linecap="round"/><line x1="632.08" y1="387.41" x2="620.59" y2="389.97" stroke="#fff" stroke-width="1.18" stroke-linecap="round"/><line x1="630.63" y1="380.12" x2="619.04" y2="382.14" stroke="#fff" stroke-width="1.18" stroke-linecap="round"/><line x1="629.53" y1="372.77" x2="617.85" y2="374.24" stroke="#fff" stroke-width="1.18" stroke-linecap="round"/><line x1="628.77" y1="365.37" x2="617.03" y2="366.30" stroke="#fff" stroke-width="1.18" stroke-linecap="round"/><line x1="628.36" y1="357.95" x2="616.60" y2="358.32" stroke="#fff" stroke-width="1.18" stroke-linecap="round"/><line x1="628.30" y1="350.52" x2="616.53" y2="350.34" stroke="#fff" stroke-width="1.18" stroke-linecap="round"/><line x1="628.59" y1="343.10" x2="616.85" y2="342.36" stroke="#fff" stroke-width="1.18" stroke-linecap="round"/><line x1="629.23" y1="335.69" x2="617.54" y2="334.40" stroke="#fff" stroke-width="1.18" stroke-linecap="round"/><line x1="641.85" y1="330.17" x2="618.60" y2="326.49" stroke="#fff" stroke-width="3.53" stroke-linecap="round"/><line x1="631.56" y1="321.02" x2="620.03" y2="318.63" stroke="#fff" stroke-width="1.18" stroke-linecap="round"/><line x1="633.24" y1="313.78" x2="621.84" y2="310.85" stroke="#fff" stroke-width="1.18" stroke-linecap="round"/><line x1="635.25" y1="306.62" x2="624.00" y2="303.16" stroke="#fff" stroke-width="1.18" stroke-linecap="round"/><line x1="637.61" y1="299.57" x2="626.53" y2="295.59" stroke="#fff" stroke-width="1.18" stroke-linecap="round"/><line x1="640.29" y1="292.64" x2="629.41" y2="288.14" stroke="#fff" stroke-width="1.18" stroke-linecap="round"/><line x1="643.29" y1="285.85" x2="632.64" y2="280.84" stroke="#fff" stroke-width="1.18" stroke-linecap="round"/><line x1="646.61" y1="279.20" x2="636.21" y2="273.69" stroke="#fff" stroke-width="1.18" stroke-linecap="round"/><line x1="650.25" y1="272.72" x2="640.11" y2="266.72" stroke="#fff" stroke-width="1.18" stroke-linecap="round"/><line x1="654.18" y1="266.41" x2="644.34" y2="259.95" stroke="#fff" stroke-width="1.18" stroke-linecap="round"/><line x1="667.93" y1="267.21" x2="648.88" y2="253.38" stroke="#fff" stroke-width="3.53" stroke-linecap="round"/><line x1="662.91" y1="254.39" x2="653.73" y2="247.03" stroke="#fff" stroke-width="1.18" stroke-linecap="round"/><line x1="667.69" y1="248.70" x2="658.87" y2="240.92" stroke="#fff" stroke-width="1.18" stroke-linecap="round"/><line x1="672.74" y1="243.24" x2="664.29" y2="235.05" stroke="#fff" stroke-width="1.18" stroke-linecap="round"/><line x1="678.03" y1="238.03" x2="669.98" y2="229.45" stroke="#fff" stroke-width="1.18" stroke-linecap="round"/><line x1="683.57" y1="233.07" x2="675.93" y2="224.12" stroke="#fff" stroke-width="1.18" stroke-linecap="round"/><line x1="689.33" y1="228.38" x2="682.12" y2="219.08" stroke="#fff" stroke-width="1.18" stroke-linecap="round"/><line x1="695.31" y1="223.96" x2="688.54" y2="214.33" stroke="#fff" stroke-width="1.18" stroke-linecap="round"/><line x1="701.49" y1="219.83" x2="695.18" y2="209.90" stroke="#fff" stroke-width="1.18" stroke-linecap="round"/><line x1="707.86" y1="216.00" x2="702.03" y2="205.78" stroke="#fff" stroke-width="1.18" stroke-linecap="round"/><line x1="719.74" y1="222.96" x2="709.05" y2="201.99" stroke="#fff" stroke-width="3.53" stroke-linecap="round"/><line x1="721.10" y1="209.26" x2="716.25" y2="198.53" stroke="#fff" stroke-width="1.18" stroke-linecap="round"/><line x1="727.94" y1="206.36" x2="723.61" y2="195.41" stroke="#fff" stroke-width="1.18" stroke-linecap="round"/><line x1="734.91" y1="203.79" x2="731.10" y2="192.65" stroke="#fff" stroke-width="1.18" stroke-linecap="round"/><line x1="742.00" y1="201.54" x2="738.71" y2="190.24" stroke="#fff" stroke-width="1.18" stroke-linecap="round"/><line x1="749.18" y1="199.64" x2="746.43" y2="188.19" stroke="#fff" stroke-width="1.18" stroke-linecap="round"/><line x1="756.45" y1="198.08" x2="754.24" y2="186.51" stroke="#fff" stroke-width="1.18" stroke-linecap="round"/><line x1="763.78" y1="196.86" x2="762.12" y2="185.20" stroke="#fff" stroke-width="1.18" stroke-linecap="round"/><line x1="771.16" y1="195.98" x2="770.05" y2="184.26" stroke="#fff" stroke-width="1.18" stroke-linecap="round"/><line x1="778.57" y1="195.46" x2="778.02" y2="183.70" stroke="#fff" stroke-width="1.18" stroke-linecap="round"/><line x1="786.00" y1="207.05" x2="786.00" y2="183.51" stroke="#fff" stroke-width="3.53" stroke-linecap="round"/><line x1="793.43" y1="195.46" x2="793.98" y2="183.70" stroke="#fff" stroke-width="1.18" stroke-linecap="round"/><line x1="800.84" y1="195.98" x2="801.95" y2="184.26" stroke="#fff" stroke-width="1.18" stroke-linecap="round"/><line x1="808.22" y1="196.86" x2="809.88" y2="185.20" stroke="#fff" stroke-width="1.18" stroke-linecap="round"/><line x1="815.55" y1="198.08" x2="817.76" y2="186.51" stroke="#fff" stroke-width="1.18" stroke-linecap="round"/><line x1="822.82" y1="199.64" x2="825.57" y2="188.19" stroke="#fff" stroke-width="1.18" stroke-linecap="round"/><line x1="830.00" y1="201.54" x2="833.29" y2="190.24" stroke="#fff" stroke-width="1.18" stroke-linecap="round"/><line x1="837.09" y1="203.79" x2="840.90" y2="192.65" stroke="#fff" stroke-width="1.18" stroke-linecap="round"/><line x1="844.06" y1="206.36" x2="848.39" y2="195.41" stroke="#fff" stroke-width="1.18" stroke-linecap="round"/><line x1="850.90" y1="209.26" x2="855.75" y2="198.53" stroke="#fff" stroke-width="1.18" stroke-linecap="round"/><line x1="852.26" y1="222.96" x2="862.95" y2="201.99" stroke="#fff" stroke-width="3.53" stroke-linecap="round"/><line x1="864.14" y1="216.00" x2="869.97" y2="205.78" stroke="#fff" stroke-width="1.18" stroke-linecap="round"/><line x1="870.51" y1="219.83" x2="876.82" y2="209.90" stroke="#fff" stroke-width="1.18" stroke-linecap="round"/><line x1="876.69" y1="223.96" x2="883.46" y2="214.33" stroke="#fff" stroke-width="1.18" stroke-linecap="round"/><line x1="882.67" y1="228.38" x2="889.88" y2="219.08" stroke="#fff" stroke-width="1.18" stroke-linecap="round"/><line x1="888.43" y1="233.07" x2="896.07" y2="224.12" stroke="#fff" stroke-width="1.18" stroke-linecap="round"/><line x1="893.97" y1="238.03" x2="902.02" y2="229.45" stroke="#fff" stroke-width="1.18" stroke-linecap="round"/><line x1="899.26" y1="243.24" x2="907.71" y2="235.05" stroke="#fff" stroke-width="1.18" stroke-linecap="round"/><line x1="904.31" y1="248.70" x2="913.13" y2="240.92" stroke="#fff" stroke-width="1.18" stroke-linecap="round"/><line x1="909.09" y1="254.39" x2="918.27" y2="247.03" stroke="#fff" stroke-width="1.18" stroke-linecap="round"/><line x1="904.07" y1="267.21" x2="923.12" y2="253.38" stroke="#fff" stroke-width="3.53" stroke-linecap="round"/><line x1="917.82" y1="266.41" x2="927.66" y2="259.95" stroke="#fff" stroke-width="1.18" stroke-linecap="round"/><line x1="921.75" y1="272.72" x2="931.89" y2="266.72" stroke="#fff" stroke-width="1.18" stroke-linecap="round"/><line x1="925.39" y1="279.20" x2="935.79" y2="273.69" stroke="#fff" stroke-width="1.18" stroke-linecap="round"/><line x1="928.71" y1="285.85" x2="939.36" y2="280.84" stroke="#fff" stroke-width="1.18" stroke-linecap="round"/><line x1="931.71" y1="292.64" x2="942.59" y2="288.14" stroke="#fff" stroke-width="1.18" stroke-linecap="round"/><line x1="934.39" y1="299.57" x2="945.47" y2="295.59" stroke="#fff" stroke-width="1.18" stroke-linecap="round"/><line x1="936.75" y1="306.62" x2="948.00" y2="303.16" stroke="#fff" stroke-width="1.18" stroke-linecap="round"/><line x1="938.76" y1="313.78" x2="950.16" y2="310.85" stroke="#fff" stroke-width="1.18" stroke-linecap="round"/><line x1="940.44" y1="321.02" x2="951.97" y2="318.63" stroke="#fff" stroke-width="1.18" stroke-linecap="round"/><line x1="930.15" y1="330.17" x2="953.40" y2="326.49" stroke="#fff" stroke-width="3.53" stroke-linecap="round"/><line x1="942.77" y1="335.69" x2="954.46" y2="334.40" stroke="#fff" stroke-width="1.18" stroke-linecap="round"/><line x1="943.41" y1="343.10" x2="955.15" y2="342.36" stroke="#fff" stroke-width="1.18" stroke-linecap="round"/><line x1="943.70" y1="350.52" x2="955.47" y2="350.34" stroke="#fff" stroke-width="1.18" stroke-linecap="round"/><line x1="943.64" y1="357.95" x2="955.40" y2="358.32" stroke="#fff" stroke-width="1.18" stroke-linecap="round"/><line x1="943.23" y1="365.37" x2="954.97" y2="366.30" stroke="#fff" stroke-width="1.18" stroke-linecap="round"/><line x1="942.47" y1="372.77" x2="954.15" y2="374.24" stroke="#fff" stroke-width="1.18" stroke-linecap="round"/><line x1="941.37" y1="380.12" x2="952.96" y2="382.14" stroke="#fff" stroke-width="1.18" stroke-linecap="round"/><line x1="939.92" y1="387.41" x2="951.41" y2="389.97" stroke="#fff" stroke-width="1.18" stroke-linecap="round"/><line x1="938.13" y1="394.62" x2="949.48" y2="397.72" stroke="#fff" stroke-width="1.18" stroke-linecap="round"/><line x1="924.80" y1="398.10" x2="947.19" y2="405.37" stroke="#fff" stroke-width="3.53" stroke-linecap="round"/><line x1="933.54" y1="408.75" x2="944.55" y2="412.91" stroke="#fff" stroke-width="1.18" stroke-linecap="round"/><line x1="930.75" y1="415.64" x2="941.55" y2="420.31" stroke="#fff" stroke-width="1.18" stroke-linecap="round"/><line x1="927.64" y1="422.39" x2="938.20" y2="427.56" stroke="#fff" stroke-width="1.18" stroke-linecap="round"/><line x1="924.21" y1="428.98" x2="934.52" y2="434.65" stroke="#fff" stroke-width="1.18" stroke-linecap="round"/><line x1="920.48" y1="435.41" x2="930.51" y2="441.56" stroke="#fff" stroke-width="1.18" stroke-linecap="round"/><line x1="916.45" y1="441.65" x2="926.18" y2="448.27" stroke="#fff" stroke-width="1.18" stroke-linecap="round"/><line x1="912.12" y1="447.70" x2="921.54" y2="454.76" stroke="#fff" stroke-width="1.18" stroke-linecap="round"/><line x1="907.52" y1="453.53" x2="916.59" y2="461.04" stroke="#fff" stroke-width="1.18" stroke-linecap="round"/><line x1="902.65" y1="459.15" x2="911.36" y2="467.07" stroke="#fff" stroke-width="1.18" stroke-linecap="round"/><line x1="889.20" y1="456.20" x2="905.85" y2="472.85" stroke="#fff" stroke-width="3.53" stroke-linecap="round"/><text x="650.9" y="496.6" font-family="Liberation Sans" font-size="26.5" fill="#fff" text-anchor="middle">0</text><text x="604.6" y="419.4" font-family="Liberation Sans" font-size="26.5" fill="#fff" text-anchor="middle">10</text><text x="596.8" y="332.3" font-family="Liberation Sans" font-size="26.5" fill="#fff" text-anchor="middle">20</text><text x="629.8" y="248.6" font-family="Liberation Sans" font-size="26.5" fill="#fff" text-anchor="middle">30</text><text x="697.9" y="189.7" font-family="Liberation Sans" font-size="26.5" fill="#fff" text-anchor="middle">40</text><text x="787.9" y="168.0" font-family="Liberation Sans" font-size="26.5" fill="#fff" text-anchor="middle">50</text><text x="873.2" y="189.7" font-family="Liberation Sans" font-size="26.5" fill="#fff" text-anchor="middle">60</text><text x="941.9" y="248.6" font-family="Liberation Sans" font-size="26.5" fill="#fff" text-anchor="middle">70</text><text x="974.3" y="332.3" font-family="Liberation Sans" font-size="26.5" fill="#fff" text-anchor="middle">80</text><text x="967.3" y="419.4" font-family="Liberation Sans" font-size="26.5" fill="#fff" text-anchor="middle">90</text><text x="920.5" y="496.6" font-family="Liberation Sans" font-size="26.5" fill="#fff" text-anchor="middle">100</text><polygon points="777.68,344.68 794.32,361.32 661.16,477.84" fill="rgb(255,107,107)" fill-opacity="0.8"/><circle cx="786.0" cy="353.0" r="42.37" fill="rgb(240,104,104)"/><circle cx="786.0" cy="353.0" r="35.31" fill="rgb(250,250,250)"/><text x="786.0" y="368.0" font-family="Liberation Sans" font-size="41" fill="#000" text-anchor="middle">0</text></svg>
<div style="position:absolute;left:269px;top:90px;width:16px;height:16px;background:#6bb33f;border-radius:2px;"><div style="position:absolute;left:1px;top:1px;font:bold 12px Liberation Sans;color:#eaffd8;letter-spacing:-1px">Qt</div></div>
<div class="t" style="left:291px;top:92.00px;font-size:13px;color:#000;">Form - quc.ui</div>
<div style="position:absolute;left:1052px;top:89px;width:30px;height:16px;border:1px solid #5a6f8a;border-radius:3px;background:linear-gradient(#c9daee 0%,#b9cde6 45%,#9fb8d6 50%,#a9c2de 100%);"><div style="position:absolute;left:9px;top:7px;width:11px;height:4px;background:#f4f4f4;border:1px solid #444;border-radius:1px"></div></div>
<div style="position:absolute;left:1085px;top:89px;width:31px;height:16px;border:1px solid #5c1f1a;border-radius:3px;background:linear-gradient(#f0a898 0%,#e58e7c 45%,#cf4a30 50%,#dd6e58 100%);"><svg style="left:8px;top:2px" width="14" height="11"><path d="M2,1.5 L12,9.5 M12,1.5 L2,9.5" stroke="#5a2a22" stroke-width="4.2"/><path d="M2.5,2 L11.5,9 M11.5,2 L2.5,9" stroke="#fff" stroke-width="2.6"/></svg></div>
<div style="position:absolute;left:459px;top:115px;width:6px;height:6px;background:#a0a0a0;border:1px solid #0000e0;"></div>
<div style="position:absolute;left:459px;top:350px;width:6px;height:6px;background:#a0a0a0;border:1px solid #0000e0;"></div>
<div style="position:absolute;left:459px;top:586px;width:6px;height:6px;background:#a0a0a0;border:1px solid #0000e0;"></div>
<div style="position:absolute;left:783px;top:115px;width:6px;height:6px;background:#a0a0a0;border:1px solid #0000e0;"></div>
<div style="position:absolute;left:783px;top:586px;width:6px;height:6px;background:#a0a0a0;border:1px solid #0000e0;"></div>
<div style="position:absolute;left:1108px;top:115px;width:6px;height:6px;background:#a0a0a0;border:1px solid #0000e0;"></div>
<div style="position:absolute;left:1108px;top:350px;width:6px;height:6px;background:#a0a0a0;border:1px solid #0000e0;"></div>
<div style="position:absolute;left:1108px;top:586px;width:6px;height:6px;background:#a0a0a0;border:1px solid #0000e0;"></div>
<svg style="left:1093px;top:112px" width="8" height="9"><polygon points="6,0 6,8 1,4" fill="#000"/></svg>
<div style="position:absolute;left:446px;top:110px;width:1px;height:513px;background:#a0a0a0;"></div>
<div style="position:absolute;left:472px;top:602px;width:638px;height:1px;background:#8c8c8c;"></div>
<div style="position:absolute;left:472px;top:603px;width:638px;height:1px;background:#fff;"></div>
<div style="position:absolute;left:462px;top:595px;width:10px;height:18px;border:1px solid #6a6a6a;border-radius:3px;background:linear-gradient(#fdfdfd,#dcdcdc);"></div>
<div style="position:absolute;left:261px;top:628px;width:866px;height:1px;background:#18c3e8;"></div>
<div style="position:absolute;left:1127px;top:80px;width:6px;height:769px;background:#f0f0f0;"></div>
<div style="position:absolute;left:1133px;top:80px;width:307px;height:19px;background:linear-gradient(#e6e6e6,#d4d4d4);border-top:1px solid #c8c8c8;"></div>
<div class="t" style="left:1135px;top:84px;font-size:12px;color:#000;">对象查看器</div>
<svg style="left:1410px;top:85px" width="28" height="10"><rect x="1.7" y="3.7" width="5.6" height="5" fill="none" stroke="#000" stroke-width="1.5"/><path d="M4,3 V0.8 H9.2 V6 H7.5" fill="none" stroke="#000" stroke-width="1.5"/><path d="M17.5,1.3 L24.5,7.7 M24.5,1.3 L17.5,7.7" stroke="#000" stroke-width="1.9"/></svg>
<svg style="left:227px;top:85px" width="28" height="10"><rect x="1.7" y="3.7" width="5.6" height="5" fill="none" stroke="#000" stroke-width="1.5"/><path d="M4,3 V0.8 H9.2 V6 H7.5" fill="none" stroke="#000" stroke-width="1.5"/><path d="M17.5,1.3 L24.5,7.7 M24.5,1.3 L17.5,7.7" stroke="#000" stroke-width="1.9"/></svg>
<div style="position:absolute;left:1133px;top:101px;width:307px;height:317px;background:#fff;border:1px solid #9a9a9a;"></div>
<div style="position:absolute;left:1134px;top:102px;width:289px;height:23px;background:linear-gradient(#ffffff 0%,#f7f7f7 50%,#ececec 100%);border-bottom:1px solid #d5d5d5;"></div>
<div style="position:absolute;left:1348px;top:104px;width:1px;height:20px;background:#e0e0e0;"></div>
<div class="t" style="left:1138px;top:109px;font-size:12px;color:#000;">对象</div>
<div class="t" style="left:1353px;top:109px;font-size:12px;color:#000;">类</div>
<div style="position:absolute;left:1134px;top:126px;width:289px;height:272px;overflow:hidden">
<div style="position:absolute;left:0;top:0.5px;width:289px;height:17px;background:#fff"></div>
<svg style="left:8.5px;top:6.5px" width="6" height="6"><polygon points="5,0 5,5 0,5" fill="#333"/></svg>
<svg style="left:24px;top:2.5px" width="14" height="14"><rect x="1.0" y="0.5" width="3.3" height="13" fill="#bcd6ee" stroke="#6f8faf" stroke-width="0.8"/><rect x="5.3" y="0.5" width="3.3" height="13" fill="#bcd6ee" stroke="#6f8faf" stroke-width="0.8"/><rect x="9.6" y="0.5" width="3.3" height="13" fill="#bcd6ee" stroke="#6f8faf" stroke-width="0.8"/></svg>
<div class="t" style="left:45px;top:2.50px;font-size:13px;color:#000">Form</div>
<svg style="left:218px;top:1.5px" width="16" height="16"><rect x="0.5" y="0.5" width="14" height="14" fill="#f4f4f4" stroke="#8aa7c9"/><path d="M2,10 L10,2 M5,13 L13,5" stroke="#c8c0b8" stroke-width="2"/></svg>
<div class="t" style="left:240px;top:2.50px;font-size:13px;color:#000">QWidget</div>
<div style="position:absolute;left:0;top:17.5px;width:289px;height:17px;background:#f5f5f5"></div>
<div class="t" style="left:43px;top:19.50px;font-size:13px;color:#000">navListView</div>
<svg style="left:218px;top:18.5px" width="16" height="16"><polygon points="4,1 15,1 15,10 12,13 1,13 1,5" fill="#3f93d6"/></svg>
<div class="t" style="left:240px;top:19.50px;font-size:13px;color:#000">NavListView</div>
<div style="position:absolute;left:0;top:34.5px;width:289px;height:17px;background:#fff"></div>
<svg style="left:28.5px;top:40.5px" width="6" height="6"><polygon points="5,0 5,5 0,5" fill="#333"/></svg>
<div class="t" style="left:43px;top:36.50px;font-size:13px;color:#000">stackedWidget</div>
<svg style="left:218px;top:35.5px" width="16" height="16"><rect x="5" y="4" width="9" height="10" fill="#1d4fa8"/><rect x="3" y="6" width="9" height="9" fill="#c4461d"/><rect x="1" y="1" width="10" height="10" fill="#7dbb2e"/></svg>
<div class="t" style="left:240px;top:36.50px;font-size:13px;color:#000">QSta...dget</div>
<div style="position:absolute;left:0;top:51.5px;width:289px;height:17px;background:#f5f5f5"></div>
<svg style="left:48.5px;top:57.5px" width="6" height="6"><polygon points="5,0 5,5 0,5" fill="#333"/></svg>
<svg style="left:64px;top:53.5px" width="14" height="14"><rect x="0.5" y="0.5" width="13" height="3.4" fill="#bcd6ee" stroke="#6f8faf" stroke-width="0.8"/><rect x="0.5" y="5.0" width="13" height="3.4" fill="#bcd6ee" stroke="#6f8faf" stroke-width="0.8"/><rect x="0.5" y="9.5" width="13" height="3.4" fill="#bcd6ee" stroke="#6f8faf" stroke-width="0.8"/></svg>
<div class="t" style="left:85px;top:53.50px;font-size:13px;color:#000">page</div>
<svg style="left:218px;top:52.5px" width="16" height="16"><rect x="0.5" y="0.5" width="14" height="14" fill="#f4f4f4" stroke="#8aa7c9"/><path d="M2,10 L10,2 M5,13 L13,5" stroke="#c8c0b8" stroke-width="2"/></svg>
<div class="t" style="left:240px;top:53.50px;font-size:13px;color:#000">QWidget</div>
<div style="position:absolute;left:0;top:68.5px;width:289px;height:17px;background:#fff"></div>
<div style="position:absolute;left:80px;top:68.5px;width:209px;height:17px;background:#f2f2f2"></div>
<div class="t" style="left:83px;top:70.50px;font-size:13px;color:#000">gaugeCar</div>
<svg style="left:218px;top:69.5px" width="16" height="16"><path d="M0,14 A8,8 0 0 1 16,14 Z" fill="#2f6aa8"/><line x1="6" y1="13" x2="11" y2="6" stroke="#fff" stroke-width="1.2"/></svg>
<div class="t" style="left:240px;top:70.50px;font-size:13px;color:#000">GaugeCar</div>
<div style="position:absolute;left:0;top:85.5px;width:289px;height:17px;background:#f5f5f5"></div>
<div class="t" style="left:83px;top:87.50px;font-size:13px;color:#000">horizontalSlider</div>
<svg style="left:218px;top:86.5px" width="16" height="16"><rect x="1" y="6.5" width="14" height="2" fill="#555"/><rect x="3" y="2" width="4.5" height="11" rx="1" fill="#7eb33b" stroke="#4a6d20" stroke-width="0.8"/></svg>
<div class="t" style="left:240px;top:87.50px;font-size:13px;color:#000">QSlider</div>
<div style="position:absolute;left:0;top:102.5px;width:289px;height:17px;background:#fff"></div>
<svg style="left:48.5px;top:108.5px" width="6" height="6"><polygon points="5,0 5,5 0,5" fill="#333"/></svg>
<svg style="left:64px;top:104.5px" width="14" height="14"><rect x="0.5" y="0.5" width="13" height="3.4" fill="#bcd6ee" stroke="#6f8faf" stroke-width="0.8"/><rect x="0.5" y="5.0" width="13" height="3.4" fill="#bcd6ee" stroke="#6f8faf" stroke-width="0.8"/><rect x="0.5" y="9.5" width="13" height="3.4" fill="#bcd6ee" stroke="#6f8faf" stroke-width="0.8"/></svg>
<div class="t" style="left:85px;top:104.50px;font-size:13px;color:#000">page_3</div>
<svg style="left:218px;top:103.5px" width="16" height="16"><rect x="0.5" y="0.5" width="14" height="14" fill="#f4f4f4" stroke="#8aa7c9"/><path d="M2,10 L10,2 M5,13 L13,5" stroke="#c8c0b8" stroke-width="2"/></svg>
<div class="t" style="left:240px;top:104.50px;font-size:13px;color:#000">QWidget</div>
<div style="position:absolute;left:0;top:119.5px;width:289px;height:17px;background:#f5f5f5"></div>
<div class="t" style="left:83px;top:121.50px;font-size:13px;color:#000">gaugeArc</div>
<svg style="left:218px;top:120.5px" width="16" height="16"><circle cx="8" cy="8" r="6.5" fill="#fff" stroke="#333" stroke-width="1.5"/><line x1="8" y1="8" x2="11" y2="5" stroke="#333" stroke-width="1.3"/></svg>
<div class="t" style="left:240px;top:121.50px;font-size:13px;color:#000">GaugeArc</div>
<div style="position:absolute;left:0;top:136.5px;width:289px;height:17px;background:#fff"></div>
<div class="t" style="left:83px;top:138.50px;font-size:13px;color:#000">horizontalSlider_2</div>
<svg style="left:218px;top:137.5px" width="16" height="16"><rect x="1" y="6.5" width="14" height="2" fill="#555"/><rect x="3" y="2" width="4.5" height="11" rx="1" fill="#7eb33b" stroke="#4a6d20" stroke-width="0.8"/></svg>
<div class="t" style="left:240px;top:138.50px;font-size:13px;color:#000">QSlider</div>
<div style="position:absolute;left:0;top:153.5px;width:289px;height:17px;background:#f5f5f5"></div>
<svg style="left:48.5px;top:159.5px" width="6" height="6"><polygon points="5,0 5,5 0,5" fill="#333"/></svg>
<svg style="left:64px;top:155.5px" width="14" height="14"><rect x="0.5" y="0.5" width="13" height="3.4" fill="#bcd6ee" stroke="#6f8faf" stroke-width="0.8"/><rect x="0.5" y="5.0" width="13" height="3.4" fill="#bcd6ee" stroke="#6f8faf" stroke-width="0.8"/><rect x="0.5" y="9.5" width="13" height="3.4" fill="#bcd6ee" stroke="#6f8faf" stroke-width="0.8"/></svg>
<div class="t" style="left:85px;top:155.50px;font-size:13px;color:#000">page_4</div>
<svg style="left:218px;top:154.5px" width="16" height="16"><rect x="0.5" y="0.5" width="14" height="14" fill="#f4f4f4" stroke="#8aa7c9"/><path d="M2,10 L10,2 M5,13 L13,5" stroke="#c8c0b8" stroke-width="2"/></svg>
<div class="t" style="left:240px;top:155.50px;font-size:13px;color:#000">QWidget</div>
<div style="position:absolute;left:0;top:170.5px;width:289px;height:17px;background:#fff"></div>
<div class="t" style="left:83px;top:172.50px;font-size:13px;color:#000">gaugeCompass</div>
<svg style="left:218px;top:171.5px" width="16" height="16"><circle cx="8" cy="8" r="6" fill="#2b88e0"/><polygon points="10,5 9,9 6,11 7,7" fill="#fff"/></svg>
<div class="t" style="left:240px;top:172.50px;font-size:13px;color:#000">Gaug...pass</div>
<div style="position:absolute;left:0;top:187.5px;width:289px;height:17px;background:#f5f5f5"></div>
<div class="t" style="left:83px;top:189.50px;font-size:13px;color:#000">horizontalSlider_3</div>
<svg style="left:218px;top:188.5px" width="16" height="16"><rect x="1" y="6.5" width="14" height="2" fill="#555"/><rect x="3" y="2" width="4.5" height="11" rx="1" fill="#7eb33b" stroke="#4a6d20" stroke-width="0.8"/></svg>
<div class="t" style="left:240px;top:189.50px;font-size:13px;color:#000">QSlider</div>
<div style="position:absolute;left:0;top:204.5px;width:289px;height:17px;background:#fff"></div>
<svg style="left:48.5px;top:210.5px" width="6" height="6"><polygon points="5,0 5,5 0,5" fill="#333"/></svg>
<svg style="left:64px;top:206.5px" width="14" height="14"><rect x="0.5" y="0.5" width="13" height="3.4" fill="#bcd6ee" stroke="#6f8faf" stroke-width="0.8"/><rect x="0.5" y="5.0" width="13" height="3.4" fill="#bcd6ee" stroke="#6f8faf" stroke-width="0.8"/><rect x="0.5" y="9.5" width="13" height="3.4" fill="#bcd6ee" stroke="#6f8faf" stroke-width="0.8"/></svg>
<div class="t" style="left:85px;top:206.50px;font-size:13px;color:#000">page_5</div>
<svg style="left:218px;top:205.5px" width="16" height="16"><rect x="0.5" y="0.5" width="14" height="14" fill="#f4f4f4" stroke="#8aa7c9"/><path d="M2,10 L10,2 M5,13 L13,5" stroke="#c8c0b8" stroke-width="2"/></svg>
<div class="t" style="left:240px;top:206.50px;font-size:13px;color:#000">QWidget</div>
<div style="position:absolute;left:0;top:221.5px;width:289px;height:17px;background:#f5f5f5"></div>
<div class="t" style="left:83px;top:223.50px;font-size:13px;color:#000">gaugeProgressBar</div>
<svg style="left:218px;top:222.5px" width="16" height="16"><path d="M2,8 A6.5,6.5 0 0 1 14,8" fill="none" stroke="#6ab04c" stroke-width="1"/><circle cx="8" cy="10" r="4.5" fill="#4e5d8f"/></svg>
<div class="t" style="left:240px;top:223.50px;font-size:13px;color:#000">Gaug...sBar</div>
<div style="position:absolute;left:0;top:238.5px;width:289px;height:17px;background:#fff"></div>
<div class="t" style="left:83px;top:240.50px;font-size:13px;color:#000">horizontalSlider_4</div>
<svg style="left:218px;top:239.5px" width="16" height="16"><rect x="1" y="6.5" width="14" height="2" fill="#555"/><rect x="3" y="2" width="4.5" height="11" rx="1" fill="#7eb33b" stroke="#4a6d20" stroke-width="0.8"/></svg>
<div class="t" style="left:240px;top:240.50px;font-size:13px;color:#000">QSlider</div>
<div style="position:absolute;left:0;top:255.5px;width:289px;height:17px;background:#f5f5f5"></div>
<svg style="left:48.5px;top:261.5px" width="6" height="6"><polygon points="5,0 5,5 0,5" fill="#333"/></svg>
<svg style="left:64px;top:257.5px" width="14" height="14"><rect x="0.5" y="0.5" width="13" height="3.4" fill="#bcd6ee" stroke="#6f8faf" stroke-width="0.8"/><rect x="0.5" y="5.0" width="13" height="3.4" fill="#bcd6ee" stroke="#6f8faf" stroke-width="0.8"/><rect x="0.5" y="9.5" width="13" height="3.4" fill="#bcd6ee" stroke="#6f8faf" stroke-width="0.8"/></svg>
<div class="t" style="left:85px;top:257.50px;font-size:13px;color:#000">page_6</div>
<svg style="left:218px;top:256.5px" width="16" height="16"><rect x="0.5" y="0.5" width="14" height="14" fill="#f4f4f4" stroke="#8aa7c9"/><path d="M2,10 L10,2 M5,13 L13,5" stroke="#c8c0b8" stroke-width="2"/></svg>
<div class="t" style="left:240px;top:257.50px;font-size:13px;color:#000">QWidget</div>
</div>
<div style="position:absolute;left:1423px;top:102px;width:16px;height:297px;background:#f0f0f0;border-left:1px solid #e4e4e4;"></div>
<svg style="left:1427px;top:109px" width="9" height="5"><polygon points="0,5 4.5,0 9,5" fill="#555"/></svg>
<svg style="left:1427px;top:388px" width="9" height="5"><polygon points="0,0 4.5,5 9,0" fill="#555"/></svg>
<div style="position:absolute;left:1424px;top:120px;width:14px;height:126px;border:1px solid #a6a6a6;border-radius:2px;background:linear-gradient(90deg,#f1f1f1,#d9d9d9);"></div>
<div style="position:absolute;left:1428px;top:179px;width:7px;height:1px;background:#777;"></div>
<div style="position:absolute;left:1428px;top:182px;width:7px;height:1px;background:#777;"></div>
<div style="position:absolute;left:1428px;top:185px;width:7px;height:1px;background:#777;"></div>
<div style="position:absolute;left:1134px;top:399px;width:289px;height:17px;background:#f0f0f0;border-top:1px solid #e4e4e4;"></div>
<svg style="left:1141px;top:403px" width="5" height="9"><polygon points="5,0 0,4.5 5,9" fill="#555"/></svg>
<svg style="left:1411px;top:403px" width="5" height="9"><polygon points="0,0 5,4.5 0,9" fill="#555"/></svg>
<div style="position:absolute;left:1152px;top:400px;width:230px;height:14px;border:1px solid #a6a6a6;border-radius:2px;background:linear-gradient(#f1f1f1,#d9d9d9);"></div>
<div style="position:absolute;left:1263px;top:404px;width:1px;height:7px;background:#777;"></div>
<div style="position:absolute;left:1266px;top:404px;width:1px;height:7px;background:#777;"></div>
<div style="position:absolute;left:1269px;top:404px;width:1px;height:7px;background:#777;"></div>
<div style="position:absolute;left:1423px;top:399px;width:16px;height:17px;background:#f0f0f0;"></div>
<div style="position:absolute;left:1133px;top:421px;width:307px;height:19px;background:linear-gradient(#e6e6e6,#d4d4d4);border-top:1px solid #c8c8c8;"></div>
<div class="t" style="left:1135px;top:426px;font-size:12px;color:#000;">属性编辑器</div>
<svg style="left:1410px;top:426px" width="28" height="10"><rect x="1.7" y="3.7" width="5.6" height="5" fill="none" stroke="#000" stroke-width="1.5"/><path d="M4,3 V0.8 H9.2 V6 H7.5" fill="none" stroke="#000" stroke-width="1.5"/><path d="M17.5,1.3 L24.5,7.7 M24.5,1.3 L17.5,7.7" stroke="#000" stroke-width="1.9"/></svg>
<svg style="left:1347px;top:448px" width="30" height="26"><defs><linearGradient id="gp" x1="0" y1="0" x2="0" y2="1"><stop offset="0" stop-color="#8df56a"/><stop offset="1" stop-color="#2fc21a"/></linearGradient></defs><path d="M9.5,1.5 H15.5 V9 H23 V14.5 H15.5 V22 H9.5 V14.5 H2 V9 H9.5 Z" fill="url(#gp)" stroke="#2a9a18" stroke-width="1"/><polygon points="20,20.5 26,20.5 23,23.5" fill="#111"/></svg>
<div style="position:absolute;left:1380px;top:457px;width:23px;height:6px;background:linear-gradient(#f4f4f4,#c9c9c9);border:1px solid #a8a8a8;border-radius:1px;"></div>
<svg style="left:1408px;top:447px" width="30" height="26"><path d="M4.5,23 L19,9" stroke="#555" stroke-width="4" stroke-linecap="round"/><path d="M4.5,23 L19,9" stroke="#c8c8c8" stroke-width="1.6" stroke-linecap="round"/><path d="M18,11 A5.5,5.5 0 1 1 25,4 L22.5,6.5 L21,5.5 L20,7 L21,8.5 L18.5,10.5 Z" fill="#bdbdbd" stroke="#666" stroke-width="0.9"/><polygon points="22,21 28,21 25,24" fill="#111"/></svg>
<div style="position:absolute;left:1135px;top:450px;width:210px;height:20px;background:#fff;border:1px solid #b8b8b8;"></div>
<div class="t" style="left:1139px;top:457.04px;font-size:10px;color:#7a7a7a;font-family:'Liberation Mono';transform:scaleY(1.2);transform-origin:0 85%;">Filter</div>
<div style="position:absolute;left:1133px;top:476px;width:307px;height:1px;background:#c9c9c9;"></div>
<div class="t" style="left:1138px;top:480px;font-size:12px;color:#000;">gaugeCar : GaugeCar</div>
<div style="position:absolute;left:1133px;top:493px;width:294px;height:361px;background:#fff;border:1px solid #9a9a9a;"></div>
<div style="position:absolute;left:1134px;top:494px;width:292px;height:26px;background:linear-gradient(#ffffff 0%,#f6f6f6 50%,#ececec 100%);border-bottom:1px solid #d5d5d5;"></div>
<div style="position:absolute;left:1255px;top:495px;width:1px;height:24px;background:#e2e2e2;"></div>
<div class="t" style="left:1138px;top:501.5px;font-size:12px;color:#000;">属性</div>
<div class="t" style="left:1261px;top:501.5px;font-size:12px;color:#000;">值</div>
<div style="position:absolute;left:1134px;top:520px;width:292px;height:327px;overflow:hidden">
<div style="position:absolute;left:0;top:0.5px;width:292px;height:21px;background:rgb(221,255,221);border-bottom:1px solid rgba(160,190,160,0.45)"></div>
<div style="position:absolute;left:121px;top:0.5px;width:1px;height:21px;background:rgba(150,180,150,0.35)"></div>
<div class="t" style="left:23px;top:4.0px;font-size:13px;color:#000">endAngle</div>
<div class="t" style="left:126px;top:4.0px;font-size:13px;color:#000">45</div>
<div style="position:absolute;left:0;top:21.5px;width:292px;height:21px;background:rgb(191,255,191);border-bottom:1px solid rgba(160,190,160,0.45)"></div>
<div style="position:absolute;left:121px;top:21.5px;width:1px;height:21px;background:rgba(150,180,150,0.35)"></div>
<div class="t" style="left:23px;top:25.0px;font-size:13px;color:#000">animation</div>
<div style="position:absolute;left:126px;top:25.5px;width:13px;height:13px;border:1px solid #8f8f8f;background:linear-gradient(135deg,#dcdcdc,#ffffff)"></div>
<div style="position:absolute;left:128px;top:27.5px;width:9px;height:9px;border:1px solid #c8c8c8;background:linear-gradient(135deg,#e0e0e0,#fafafa)"></div>
<div style="position:absolute;left:0;top:42.5px;width:292px;height:21px;background:rgb(221,255,221);border-bottom:1px solid rgba(160,190,160,0.45)"></div>
<div style="position:absolute;left:121px;top:42.5px;width:1px;height:21px;background:rgba(150,180,150,0.35)"></div>
<div class="t" style="left:23px;top:46.0px;font-size:13px;color:#000">animationStep</div>
<div class="t" style="left:126px;top:46.0px;font-size:13px;color:#000">0.500000</div>
<div style="position:absolute;left:0;top:63.5px;width:292px;height:21px;background:rgb(191,255,191);border-bottom:1px solid rgba(160,190,160,0.45)"></div>
<div style="position:absolute;left:121px;top:63.5px;width:1px;height:21px;background:rgba(150,180,150,0.35)"></div>
<svg style="left:9px;top:69.5px" width="6" height="9"><polygon points="0.5,0.5 5,4.5 0.5,8.5" fill="none" stroke="#777" stroke-width="1"/></svg>
<div class="t" style="left:23px;top:67.0px;font-size:13px;color:#000">outerCircleColor</div>
<div style="position:absolute;left:125px;top:66.5px;width:16px;height:15px;background:rgba(80,80,80,1.000)"></div>
<div class="t" style="left:147px;top:67.0px;font-size:13px;color:#000">[80, 80, 80] (255)</div>
<div style="position:absolute;left:0;top:84.5px;width:292px;height:21px;background:rgb(221,255,221);border-bottom:1px solid rgba(160,190,160,0.45)"></div>
<div style="position:absolute;left:121px;top:84.5px;width:1px;height:21px;background:rgba(150,180,150,0.35)"></div>
<svg style="left:9px;top:90.5px" width="6" height="9"><polygon points="0.5,0.5 5,4.5 0.5,8.5" fill="none" stroke="#777" stroke-width="1"/></svg>
<div class="t" style="left:23px;top:88.0px;font-size:13px;color:#000">innerCircleColor</div>
<div style="position:absolute;left:125px;top:87.5px;width:16px;height:15px;background:rgba(60,60,60,1.000)"></div>
<div class="t" style="left:147px;top:88.0px;font-size:13px;color:#000">[60, 60, 60] (255)</div>
<div style="position:absolute;left:0;top:105.5px;width:292px;height:21px;background:rgb(191,255,191);border-bottom:1px solid rgba(160,190,160,0.45)"></div>
<div style="position:absolute;left:121px;top:105.5px;width:1px;height:21px;background:rgba(150,180,150,0.35)"></div>
<svg style="left:9px;top:111.5px" width="6" height="9"><polygon points="0.5,0.5 5,4.5 0.5,8.5" fill="none" stroke="#777" stroke-width="1"/></svg>
<div class="t" style="left:23px;top:109.0px;font-size:13px;color:#000">pieColorStart</div>
<div style="position:absolute;left:125px;top:108.5px;width:16px;height:15px;background:rgba(24,189,155,1.000)"></div>
<div class="t" style="left:147px;top:109.0px;font-size:13px;color:#000">[24, 189, 155] (255)</div>
<div style="position:absolute;left:0;top:126.5px;width:292px;height:21px;background:rgb(221,255,221);border-bottom:1px solid rgba(160,190,160,0.45)"></div>
<div style="position:absolute;left:121px;top:126.5px;width:1px;height:21px;background:rgba(150,180,150,0.35)"></div>
<svg style="left:9px;top:132.5px" width="6" height="9"><polygon points="0.5,0.5 5,4.5 0.5,8.5" fill="none" stroke="#777" stroke-width="1"/></svg>
<div class="t" style="left:23px;top:130.0px;font-size:13px;color:#000">pieColorMid</div>
<div style="position:absolute;left:125px;top:129.5px;width:16px;height:15px;background:rgba(218,218,0,1.000)"></div>
<div class="t" style="left:147px;top:130.0px;font-size:13px;color:#000">[218, 218, 0] (255)</div>
<div style="position:absolute;left:0;top:147.5px;width:292px;height:21px;background:rgb(191,255,191);border-bottom:1px solid rgba(160,190,160,0.45)"></div>
<div style="position:absolute;left:121px;top:147.5px;width:1px;height:21px;background:rgba(150,180,150,0.35)"></div>
<svg style="left:9px;top:153.5px" width="6" height="9"><polygon points="0.5,0.5 5,4.5 0.5,8.5" fill="none" stroke="#777" stroke-width="1"/></svg>
<div class="t" style="left:23px;top:151.0px;font-size:13px;color:#000">pieColorEnd</div>
<div style="position:absolute;left:125px;top:150.5px;width:16px;height:15px;background:rgba(255,107,107,1.000)"></div>
<div class="t" style="left:147px;top:151.0px;font-size:13px;color:#000">[255, 107, 107] (255)</div>
<div style="position:absolute;left:0;top:168.5px;width:292px;height:21px;background:rgb(221,255,221);border-bottom:1px solid rgba(160,190,160,0.45)"></div>
<div style="position:absolute;left:121px;top:168.5px;width:1px;height:21px;background:rgba(150,180,150,0.35)"></div>
<svg style="left:9px;top:174.5px" width="6" height="9"><polygon points="0.5,0.5 5,4.5 0.5,8.5" fill="none" stroke="#777" stroke-width="1"/></svg>
<div class="t" style="left:23px;top:172.0px;font-size:13px;color:#000">coverCircleColor</div>
<div style="position:absolute;left:125px;top:171.5px;width:16px;height:15px;background:rgba(100,100,100,1.000)"></div>
<div class="t" style="left:147px;top:172.0px;font-size:13px;color:#000">[100, 100, 100] (255)</div>
<div style="position:absolute;left:0;top:189.5px;width:292px;height:21px;background:rgb(191,255,191);border-bottom:1px solid rgba(160,190,160,0.45)"></div>
<div style="position:absolute;left:121px;top:189.5px;width:1px;height:21px;background:rgba(150,180,150,0.35)"></div>
<svg style="left:9px;top:195.5px" width="6" height="9"><polygon points="0.5,0.5 5,4.5 0.5,8.5" fill="none" stroke="#777" stroke-width="1"/></svg>
<div class="t" style="left:23px;top:193.0px;font-size:13px;color:#000">scaleColor</div>
<div style="position:absolute;left:125px;top:192.5px;width:16px;height:15px;background:rgba(255,255,255,1.000)"></div>
<div class="t" style="left:147px;top:193.0px;font-size:13px;color:#000">[255, 255, 255] (255)</div>
<div style="position:absolute;left:0;top:210.5px;width:292px;height:21px;background:rgb(221,255,221);border-bottom:1px solid rgba(160,190,160,0.45)"></div>
<div style="position:absolute;left:121px;top:210.5px;width:1px;height:21px;background:rgba(150,180,150,0.35)"></div>
<svg style="left:9px;top:216.5px" width="6" height="9"><polygon points="0.5,0.5 5,4.5 0.5,8.5" fill="none" stroke="#777" stroke-width="1"/></svg>
<div class="t" style="left:23px;top:214.0px;font-size:13px;color:#000">pointerColor</div>
<div style="position:absolute;left:125px;top:213.5px;width:16px;height:15px;background:rgba(255,107,107,1.000)"></div>
<div class="t" style="left:147px;top:214.0px;font-size:13px;color:#000">[255, 107, 107] (255)</div>
<div style="position:absolute;left:0;top:231.5px;width:292px;height:21px;background:rgb(191,255,191);border-bottom:1px solid rgba(160,190,160,0.45)"></div>
<div style="position:absolute;left:121px;top:231.5px;width:1px;height:21px;background:rgba(150,180,150,0.35)"></div>
<svg style="left:9px;top:237.5px" width="6" height="9"><polygon points="0.5,0.5 5,4.5 0.5,8.5" fill="none" stroke="#777" stroke-width="1"/></svg>
<div class="t" style="left:23px;top:235.0px;font-size:13px;color:#000">centerCircleCo...</div>
<div style="position:absolute;left:125px;top:234.5px;width:16px;height:15px;background:rgba(250,250,250,1.000)"></div>
<div class="t" style="left:147px;top:235.0px;font-size:13px;color:#000">[250, 250, 250] (255)</div>
<div style="position:absolute;left:0;top:252.5px;width:292px;height:21px;background:rgb(221,255,221);border-bottom:1px solid rgba(160,190,160,0.45)"></div>
<div style="position:absolute;left:121px;top:252.5px;width:1px;height:21px;background:rgba(150,180,150,0.35)"></div>
<svg style="left:9px;top:258.5px" width="6" height="9"><polygon points="0.5,0.5 5,4.5 0.5,8.5" fill="none" stroke="#777" stroke-width="1"/></svg>
<div class="t" style="left:23px;top:256.0px;font-size:13px;color:#000">textColor</div>
<div style="position:absolute;left:125px;top:255.5px;width:16px;height:15px;background:rgba(0,0,0,1.000)"></div>
<div class="t" style="left:147px;top:256.0px;font-size:13px;color:#000">[0, 0, 0] (255)</div>
<div style="position:absolute;left:0;top:273.5px;width:292px;height:21px;background:rgb(191,255,191);border-bottom:1px solid rgba(160,190,160,0.45)"></div>
<div style="position:absolute;left:121px;top:273.5px;width:1px;height:21px;background:rgba(150,180,150,0.35)"></div>
<div class="t" style="left:23px;top:277.0px;font-size:13px;color:#000">showOverlay</div>
<div style="position:absolute;left:126px;top:277.5px;width:13px;height:13px;border:1px solid #8f8f8f;background:linear-gradient(135deg,#dcdcdc,#ffffff)"></div>
<div style="position:absolute;left:128px;top:279.5px;width:9px;height:9px;border:1px solid #c8c8c8;background:linear-gradient(135deg,#e0e0e0,#fafafa)"></div>
<div style="position:absolute;left:0;top:294.5px;width:292px;height:21px;background:rgb(221,255,221);border-bottom:1px solid rgba(160,190,160,0.45)"></div>
<div style="position:absolute;left:121px;top:294.5px;width:1px;height:21px;background:rgba(150,180,150,0.35)"></div>
<svg style="left:9px;top:300.5px" width="6" height="9"><polygon points="0.5,0.5 5,4.5 0.5,8.5" fill="none" stroke="#777" stroke-width="1"/></svg>
<div class="t" style="left:23px;top:298.0px;font-size:13px;color:#000">overlayColor</div>
<div style="position:absolute;left:125px;top:297.5px;width:16px;height:15px;background:rgba(255,255,255,0.235)"></div>
<div class="t" style="left:147px;top:298.0px;font-size:13px;color:#000">[255, 255, 255] (60)</div>
<div style="position:absolute;left:0;top:315.5px;width:292px;height:21px;background:rgb(191,255,191);border-bottom:1px solid rgba(160,190,160,0.45)"></div>
<div style="position:absolute;left:121px;top:315.5px;width:1px;height:21px;background:rgba(150,180,150,0.35)"></div>
<div class="t" style="left:23px;top:319.0px;font-size:13px;color:#000">pieStyle</div>
<div class="t" style="left:126px;top:319.0px;font-size:13px;color:#000">PieStyle_Three</div>
</div>
<div style="position:absolute;left:1426px;top:494px;width:13px;height:354px;background:#f0f0f0;border-left:1px solid #e4e4e4;"></div>
<svg style="left:1428px;top:502px" width="9" height="5"><polygon points="0,5 4.5,0 9,5" fill="#555"/></svg>
<svg style="left:1428px;top:836px" width="9" height="5"><polygon points="0,0 4.5,5 9,0" fill="#555"/></svg>
<div style="position:absolute;left:1427px;top:748px;width:12px;height:71px;border:1px solid #a6a6a6;border-radius:2px;background:linear-gradient(90deg,#f1f1f1,#d9d9d9);"></div>
<div style="position:absolute;left:1429px;top:779px;width:7px;height:1px;background:#777;"></div>
<div style="position:absolute;left:1429px;top:782px;width:7px;height:1px;background:#777;"></div>
<div style="position:absolute;left:1429px;top:785px;width:7px;height:1px;background:#777;"></div>
<div style="position:absolute;left:0px;top:848px;width:1440px;height:18px;background:#f0f0f0;"></div>
<div style="position:absolute;left:0px;top:854px;width:1440px;height:16px;background:#f0f0f0;"></div>
<div style="position:absolute;left:0px;top:870px;width:1440px;height:8px;background:linear-gradient(#1d2733 0px,#546a82 1px,#6b829b 8px);"></div>
<svg style="left:8px;top:862px" width="40" height="16"><circle cx="19" cy="19" r="17" fill="#6f9bb8" stroke="#2a3d52" stroke-width="1"/><circle cx="19" cy="19" r="15" fill="#a8cde0"/><path d="M11,14 Q15,10 19,13 L18,20 Q14,18 10,21 Z" fill="#e84c1c"/><path d="M20,13 Q24,10 28,13 L27,20 Q23,17 19,20 Z" fill="#7cbc2c"/></svg>
<div style="position:absolute;left:60px;top:871px;width:43px;height:7px;background:linear-gradient(#b8c6d6,#9fb0c3);border:1px solid #24303c;border-bottom:none;border-radius:2px 2px 0 0;"></div>
<div style="position:absolute;left:106px;top:871px;width:43px;height:7px;background:linear-gradient(#dedcb0,#9fb0c3);border:1px solid #24303c;border-bottom:none;border-radius:2px 2px 0 0;"></div>
<div style="position:absolute;left:151px;top:871px;width:43px;height:7px;background:linear-gradient(#c5d0dd,#9fb0c3);border:1px solid #24303c;border-bottom:none;border-radius:2px 2px 0 0;"></div>
<div style="position:absolute;left:198px;top:871px;width:43px;height:7px;background:linear-gradient(#e6ecf2,#9fb0c3);border:1px solid #24303c;border-bottom:none;border-radius:2px 2px 0 0;"></div>
<div style="position:absolute;left:1427px;top:871px;width:13px;height:7px;background:linear-gradient(#a9bbcc,#8ea2b8);border-left:1px solid #24303c;"></div>
<div style="position:absolute;left:1124px;top:481px;width:301px;height:373px;border:7px solid #f52f2f;"></div>
<svg style="left:0;top:0" width="260" height="260"><polygon points="125.5,146.4 148.7,154.1 144.6,158.2 190,207.6 189,207.8 139.1,166.4 134.1,169.6" fill="#fb3434"/></svg>
</body></html>
